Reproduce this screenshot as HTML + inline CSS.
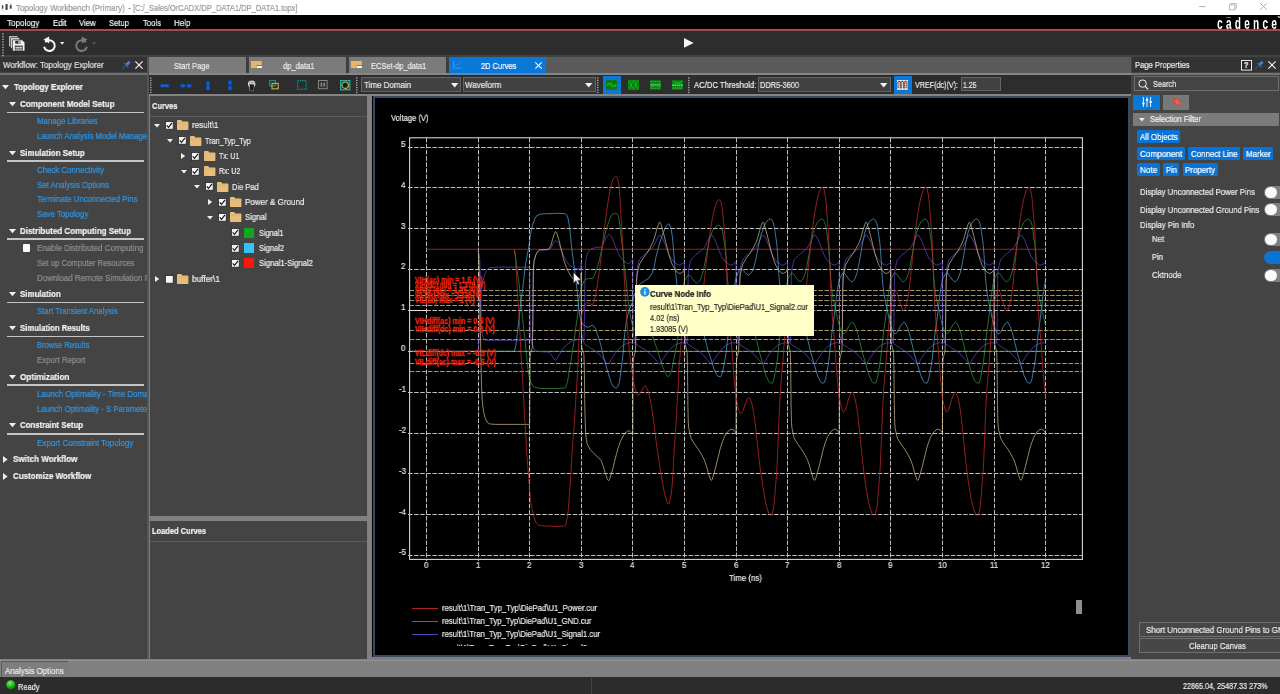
<!DOCTYPE html>
<html><head><meta charset="utf-8"><title>Topology Workbench</title>
<style>
*{margin:0;padding:0;box-sizing:border-box}
html,body{width:1280px;height:694px;overflow:hidden;background:#444;}
body{font-family:"Liberation Sans",sans-serif;font-size:9px;color:#e6e6e6;position:relative;line-height:1}
.a{position:absolute}
.t{will-change:transform;-webkit-text-stroke:0.22px currentColor;position:absolute;white-space:nowrap;line-height:12px;height:12px;transform-origin:0 50%}
.b{font-weight:bold}
.lnk{color:#2f97e6}
.dis{color:#8f8f8f}
.hr{position:absolute;height:1.4px;background:#c4c4c4;left:6.7px;width:137px}
.cb{position:absolute;width:8.6px;height:8.6px;background:#f4f4f4;border:0.8px solid #222}
.chip{position:absolute;background:#0a74d6;border-radius:1.5px;height:13px}
svg{position:absolute;overflow:visible}
</style></head>
<body>
<div class="a" style="left:0px;top:0px;width:1280px;height:16px;background:#ffffff;"></div>
<svg style="left:0px;top:0px" width="14" height="14" viewBox="0 0 14 14"><ellipse cx="2.6" cy="7" rx="0.85" ry="1.9" fill="#4a4a4a"/><rect x="5.4" y="4" width="2.3" height="5.9" rx="0.3" fill="#505050"/><ellipse cx="10.7" cy="6.7" rx="1.05" ry="2.2" fill="#484848"/><path d="M1.7 8.2C1.6 10.4 2.8 11.6 4.2 11.2M8.2 2.6C9.8 2.2 11.2 3.2 11.4 4.8" fill="none" stroke="#e6aab2" stroke-width="0.6"/></svg>
<div class="t " style="left:15.5px;top:1.6px;transform:scaleX(0.846);font-size:9.4px;color:#989898;">Topology Workbench (Primary)</div>
<div class="t " style="left:127.5px;top:1.6px;transform:scaleX(0.958);font-size:9.4px;color:#989898;">-</div>
<div class="t " style="left:133.3px;top:1.6px;transform:scaleX(0.804);font-size:9.4px;color:#989898;">[C:/_Sales/OrCADX/DP_DATA1/DP_DATA1.topx]</div>
<svg style="left:1199.2px;top:6.4px" width="7" height="1.2" viewBox="0 0 7 1.2"><rect width="6.6" height="1.1" fill="#b8b8b8"/></svg>
<svg style="left:1229px;top:3px" width="8" height="7.4" viewBox="0 0 8 7.4"><rect x="0.5" y="1.9" width="5.4" height="4.9" fill="none" stroke="#b4b4b4" stroke-width="0.9"/><path d="M1.9 1.9V0.5H7.3V5.3H5.9" fill="none" stroke="#b4b4b4" stroke-width="0.9"/></svg>
<svg style="left:1260px;top:2.8px" width="7" height="7" viewBox="0 0 7 7"><path d="M0.3 0.3L6.7 6.7M6.7 0.3L0.3 6.7" stroke="#a8a8a8" stroke-width="1"/></svg>
<div class="a" style="left:0px;top:15.2px;width:1280px;height:14.3px;background:#000000;"></div>
<div class="a" style="left:0px;top:29.3px;width:1280px;height:2px;background:#a24c4a;"></div>
<div class="t " style="left:7.0px;top:16.7px;transform:scaleX(0.897);color:#f2f2f2;">Topology</div>
<div class="t " style="left:52.6px;top:16.7px;transform:scaleX(0.864);color:#f2f2f2;">Edit</div>
<div class="t " style="left:79.2px;top:16.7px;transform:scaleX(0.868);color:#f2f2f2;">View</div>
<div class="t " style="left:109.4px;top:16.7px;transform:scaleX(0.846);color:#f2f2f2;">Setup</div>
<div class="t " style="left:143.0px;top:16.7px;transform:scaleX(0.857);color:#f2f2f2;">Tools</div>
<div class="t " style="left:174.0px;top:16.7px;transform:scaleX(0.891);color:#f2f2f2;">Help</div>
<div class="t b" style="left:1216.8px;top:17.5px;font-size:17px;letter-spacing:5.3px;color:#fff;transform:scaleX(0.6);-webkit-text-stroke:0">cadence</div>
<div class="a" style="left:1225.6px;top:16.8px;width:5.2px;height:1.4px;background:#c0485a;"></div>
<div class="t " style="left:1277.4px;top:12.4px;transform:scaleX(1.000);font-size:4px;color:#ccc;">&trade;</div>
<div class="a" style="left:0px;top:31.2px;width:1280px;height:24.6px;background:#2d2d2d;"></div>
<div class="a" style="left:0px;top:55px;width:1280px;height:2.2px;background:#424242;"></div>
<svg style="left:2px;top:32.6px" width="2" height="24" viewBox="0 0 2 24"><rect x="0.3" y="0.3" width="1.3" height="1.3" fill="#c4c4c4"/><rect x="0.3" y="3.0" width="1.3" height="1.3" fill="#c4c4c4"/><rect x="0.3" y="5.7" width="1.3" height="1.3" fill="#c4c4c4"/><rect x="0.3" y="8.4" width="1.3" height="1.3" fill="#c4c4c4"/><rect x="0.3" y="11.1" width="1.3" height="1.3" fill="#c4c4c4"/><rect x="0.3" y="13.8" width="1.3" height="1.3" fill="#c4c4c4"/><rect x="0.3" y="16.5" width="1.3" height="1.3" fill="#c4c4c4"/><rect x="0.3" y="19.2" width="1.3" height="1.3" fill="#c4c4c4"/><rect x="0.3" y="21.9" width="1.3" height="1.3" fill="#c4c4c4"/></svg>
<svg style="left:9px;top:36px" width="16.4" height="15.6" viewBox="0 0 16.4 15.6"><rect x="0" y="0" width="8.6" height="10.4" rx="0.6" fill="#bcbcbc"/><rect x="1.6" y="1.6" width="9" height="10.6" rx="0.6" fill="#dcdcdc" stroke="#2d2d2d" stroke-width="0.7"/><path d="M3.6 3.8H13L15.9 6.6V15.1H3.6Z" fill="#f6f6f6" stroke="#2d2d2d" stroke-width="0.7"/><rect x="6.2" y="4.7" width="5.2" height="3" fill="#2d2d2d"/><rect x="9.4" y="5.1" width="1.3" height="2.2" fill="#f6f6f6"/><rect x="5.8" y="9.6" width="8" height="4.8" fill="#2d2d2d"/><rect x="6.4" y="10.8" width="6.8" height="1" fill="#f6f6f6"/><rect x="6.4" y="12.6" width="6.8" height="1" fill="#f6f6f6"/></svg>
<svg style="left:42px;top:36px" width="15" height="16" viewBox="0 0 15 16"><path d="M3.2 6.2A5.4 5.4 0 1 1 2.1 10.8" fill="none" stroke="#f8f8f8" stroke-width="2"/><path d="M1.6 3.6L7.2 0.4V7.4Z" fill="#f8f8f8"/></svg>
<svg style="left:59.9px;top:42.4px" width="4.4" height="2.8" viewBox="0 0 4.4 2.8"><path d="M0 0H4.4L2.2 2.8Z" fill="#f0f0f0"/></svg>
<svg style="left:73.5px;top:36px" width="15" height="16" viewBox="0 0 15 16"><path d="M11.8 6.2A5.4 5.4 0 1 0 12.9 10.8" fill="none" stroke="#7a7a7a" stroke-width="2"/><path d="M13.4 3.6L7.8 0.4V7.4Z" fill="#7a7a7a"/></svg>
<svg style="left:92.3px;top:42.4px" width="4.4" height="2.8" viewBox="0 0 4.4 2.8"><path d="M0 0H4.4L2.2 2.8Z" fill="#555"/></svg>
<svg style="left:683.5px;top:38.3px" width="10" height="10" viewBox="0 0 10 10"><path d="M0 0L9.6 4.9L0 9.8Z" fill="#f4f4f4"/></svg>
<div class="a" style="left:0px;top:57.2px;width:148px;height:602.5px;background:#444444;"></div>
<div class="a" style="left:0px;top:57.4px;width:147px;height:15px;background:#333333;"></div>
<div class="a" style="left:0px;top:72.5px;width:147px;height:2.2px;background:#707070;"></div>
<div class="a" style="left:147px;top:57.4px;width:2px;height:602px;background:#555555;"></div>
<div class="t " style="left:3.2px;top:59.4px;transform:scaleX(0.885);color:#e0e0e0;">Workflow: Topology Explorer</div>
<svg style="left:121.4px;top:60.2px" width="10" height="11" viewBox="0 0 10 11"><g transform="rotate(45 5 5.5)"><rect x="3.6" y="0.2" width="2.8" height="4.6" fill="#3c70bc"/><rect x="2.2" y="4.4" width="5.6" height="1.1" fill="#3c70bc"/><path d="M5 5.4V10.6" stroke="#3566ac" stroke-width="0.9"/><rect x="4.2" y="0.8" width="0.8" height="3.4" fill="#6a9ade"/></g></svg>
<svg style="left:134.6px;top:60.9px" width="8" height="8" viewBox="0 0 8 8"><path d="M0.4 0.4L7.6 7.6M7.6 0.4L0.4 7.6" stroke="#f4f4f4" stroke-width="1.15"/></svg>
<svg style="left:1.7999999999999998px;top:85.10000000000001px" width="7.0" height="4.2" viewBox="0 0 7.0 4.2"><path d="M0 0H7.0L3.5 4.2Z" fill="#f0f0f0"/></svg>
<div class="t b" style="left:13.5px;top:81.1px;transform:scaleX(0.874);color:#f4f4f4;">Topology Explorer</div>
<svg style="left:8.6px;top:101.9px" width="7.0" height="4.2" viewBox="0 0 7.0 4.2"><path d="M0 0H7.0L3.5 4.2Z" fill="#f0f0f0"/></svg>
<div class="t b" style="left:20.0px;top:97.8px;transform:scaleX(0.892);color:#f4f4f4;">Component Model Setup</div>
<div class="hr" style="top:111.8px"></div>
<div class="t lnk" style="left:36.5px;top:115.4px;transform:scaleX(0.870);">Manage Libraries</div>
<div class="a" style="left:0;top:129px;width:147px;height:14px;overflow:hidden"><div class="t lnk" style="left:36.5px;top:1.4px;transform:scaleX(0.866);">Launch Analysis Model Manager</div>
</div>
<svg style="left:8.6px;top:150.8px" width="7.0" height="4.2" viewBox="0 0 7.0 4.2"><path d="M0 0H7.0L3.5 4.2Z" fill="#f0f0f0"/></svg>
<div class="t b" style="left:20.0px;top:146.7px;transform:scaleX(0.880);color:#f4f4f4;">Simulation Setup</div>
<div class="hr" style="top:160.4px"></div>
<div class="t lnk" style="left:36.5px;top:164.2px;transform:scaleX(0.870);">Check Connectivity</div>
<div class="t lnk" style="left:36.5px;top:178.6px;transform:scaleX(0.872);">Set Analysis Options</div>
<div class="t lnk" style="left:36.5px;top:193.4px;transform:scaleX(0.873);">Terminate Unconnected Pins</div>
<div class="t lnk" style="left:36.5px;top:207.9px;transform:scaleX(0.870);">Save Topology</div>
<svg style="left:8.6px;top:228.9px" width="7.0" height="4.2" viewBox="0 0 7.0 4.2"><path d="M0 0H7.0L3.5 4.2Z" fill="#f0f0f0"/></svg>
<div class="t b" style="left:20.0px;top:224.8px;transform:scaleX(0.888);color:#f4f4f4;">Distributed Computing Setup</div>
<div class="hr" style="top:238.4px"></div>
<div class="a" style="left:22.8px;top:244.2px;width:7.6px;height:7.6px;background:#fafafa;border-radius:1px"></div>
<div class="t dis" style="left:36.5px;top:242.0px;transform:scaleX(0.891);">Enable Distributed Computing</div>
<div class="t dis" style="left:36.5px;top:256.8px;transform:scaleX(0.859);">Set up Computer Resources</div>
<div class="a" style="left:0;top:270.5px;width:147px;height:14px;overflow:hidden"><div class="t dis" style="left:36.5px;top:1.0px;transform:scaleX(0.890);">Download Remote Simulation Files</div>
</div>
<svg style="left:8.6px;top:291.9px" width="7.0" height="4.2" viewBox="0 0 7.0 4.2"><path d="M0 0H7.0L3.5 4.2Z" fill="#f0f0f0"/></svg>
<div class="t b" style="left:20.0px;top:287.8px;transform:scaleX(0.885);color:#f4f4f4;">Simulation</div>
<div class="hr" style="top:301.7px"></div>
<div class="t lnk" style="left:36.5px;top:305.3px;transform:scaleX(0.856);">Start Transient Analysis</div>
<svg style="left:8.6px;top:326.0px" width="7.0" height="4.2" viewBox="0 0 7.0 4.2"><path d="M0 0H7.0L3.5 4.2Z" fill="#f0f0f0"/></svg>
<div class="t b" style="left:20.0px;top:321.9px;transform:scaleX(0.860);color:#f4f4f4;">Simulation Results</div>
<div class="hr" style="top:335.6px"></div>
<div class="t lnk" style="left:36.5px;top:339.4px;transform:scaleX(0.837);">Browse Results</div>
<div class="t dis" style="left:36.5px;top:354.3px;transform:scaleX(0.874);">Export Report</div>
<svg style="left:8.6px;top:374.7px" width="7.0" height="4.2" viewBox="0 0 7.0 4.2"><path d="M0 0H7.0L3.5 4.2Z" fill="#f0f0f0"/></svg>
<div class="t b" style="left:20.0px;top:370.6px;transform:scaleX(0.907);color:#f4f4f4;">Optimization</div>
<div class="hr" style="top:384.3px"></div>
<div class="a" style="left:0;top:387px;width:147px;height:30px;overflow:hidden"><div class="t lnk" style="left:36.5px;top:1.4px;transform:scaleX(0.885);">Launch Optimality - Time Domain</div>
<div class="t lnk" style="left:36.5px;top:16.1px;transform:scaleX(0.863);">Launch Optimality - S Parameter</div>
</div>
<svg style="left:8.6px;top:423.4px" width="7.0" height="4.2" viewBox="0 0 7.0 4.2"><path d="M0 0H7.0L3.5 4.2Z" fill="#f0f0f0"/></svg>
<div class="t b" style="left:20.0px;top:419.3px;transform:scaleX(0.869);color:#f4f4f4;">Constraint Setup</div>
<div class="hr" style="top:433.3px"></div>
<div class="t lnk" style="left:36.5px;top:437.0px;transform:scaleX(0.892);">Export Constraint Topology</div>
<svg style="left:3.2px;top:456.1px" width="4.6" height="7.0" viewBox="0 0 4.6 7.0"><path d="M0 0L4.6 3.5L0 7.0Z" fill="#f0f0f0"/></svg>
<div class="t b" style="left:13.0px;top:453.4px;transform:scaleX(0.897);color:#f4f4f4;">Switch Workflow</div>
<svg style="left:3.2px;top:472.5px" width="4.6" height="7.0" viewBox="0 0 4.6 7.0"><path d="M0 0L4.6 3.5L0 7.0Z" fill="#f0f0f0"/></svg>
<div class="t b" style="left:12.7px;top:469.8px;transform:scaleX(0.886);color:#f4f4f4;">Customize Workflow</div>
<div class="a" style="left:149px;top:57.2px;width:983px;height:17.3px;background:#5a5a5a;"></div>
<div class="a" style="left:149px;top:57.4px;width:97.3px;height:17px;background:#7b7b7b;"></div>
<div class="a" style="left:249px;top:57.4px;width:97.3px;height:17px;background:#7b7b7b;"></div>
<div class="a" style="left:349px;top:57.4px;width:97.3px;height:17px;background:#7b7b7b;"></div>
<div class="a" style="left:449px;top:57.4px;width:97.3px;height:17px;background:#0a78d7;"></div>
<div class="a" style="left:246.3px;top:57.4px;width:2.7px;height:15.6px;background:#3e3e3e;"></div>
<div class="a" style="left:346.3px;top:57.4px;width:2.7px;height:15.6px;background:#3e3e3e;"></div>
<div class="a" style="left:446.3px;top:57.4px;width:2.7px;height:15.6px;background:#3e3e3e;"></div>
<div class="a" style="left:149px;top:73px;width:983px;height:2px;background:#868686;"></div>
<div class="a" style="left:449px;top:73px;width:97.4px;height:2px;background:#5a88bc;"></div>
<div class="t " style="left:173.7px;top:59.7px;transform:scaleX(0.837);color:#ececec;">Start Page</div>
<svg style="left:251px;top:61.1px" width="11" height="7" viewBox="0 0 11 7"><path d="M0 0H10.8V3.9H5.6V7H0Z" fill="#e8b468"/><rect x="5.9" y="5" width="5" height="2" fill="#fafafa"/></svg>
<div class="t " style="left:282.8px;top:59.7px;transform:scaleX(0.839);color:#ececec;">dp_data1</div>
<svg style="left:351.3px;top:61.1px" width="11" height="7" viewBox="0 0 11 7"><path d="M0 0H10.8V3.9H5.6V7H0Z" fill="#e8b468"/><rect x="5.9" y="5" width="5" height="2" fill="#fafafa"/></svg>
<div class="t " style="left:370.5px;top:59.7px;transform:scaleX(0.830);color:#ececec;">ECSet-dp_data1</div>
<svg style="left:452.5px;top:61px" width="9" height="8" viewBox="0 0 9 8"><path d="M0.6 0V7.2H8.4" fill="none" stroke="#3f9cf0" stroke-width="0.9"/><path d="M1.4 5.8L3.4 3L5.2 4L7.6 1.4" fill="none" stroke="#3f9cf0" stroke-width="0.6"/></svg>
<div class="t " style="left:480.7px;top:59.7px;transform:scaleX(0.830);color:#ffffff;">2D Curves</div>
<svg style="left:534.6px;top:62px" width="7" height="7" viewBox="0 0 7 7"><path d="M0.3 0.3L6.7 6.7M6.7 0.3L0.3 6.7" stroke="#fff" stroke-width="1.1"/></svg>
<div class="a" style="left:149px;top:75px;width:983px;height:18.7px;background:#2d2d2d;"></div>
<div class="a" style="left:149px;top:93.5px;width:983px;height:2.2px;background:#848484;"></div>
<svg style="left:149.6px;top:76.5px" width="2" height="17" viewBox="0 0 2 17"><rect x="0.2" y="0.4" width="1.2" height="1.2" fill="#c8c8c8"/><rect x="0.2" y="2.8" width="1.2" height="1.2" fill="#c8c8c8"/><rect x="0.2" y="5.2" width="1.2" height="1.2" fill="#c8c8c8"/><rect x="0.2" y="7.6" width="1.2" height="1.2" fill="#c8c8c8"/><rect x="0.2" y="10.0" width="1.2" height="1.2" fill="#c8c8c8"/><rect x="0.2" y="12.4" width="1.2" height="1.2" fill="#c8c8c8"/><rect x="0.2" y="14.8" width="1.2" height="1.2" fill="#c8c8c8"/></svg>
<svg style="left:356.2px;top:76.5px" width="2" height="17" viewBox="0 0 2 17"><rect x="0.2" y="0.4" width="1.2" height="1.2" fill="#c8c8c8"/><rect x="0.2" y="2.8" width="1.2" height="1.2" fill="#c8c8c8"/><rect x="0.2" y="5.2" width="1.2" height="1.2" fill="#c8c8c8"/><rect x="0.2" y="7.6" width="1.2" height="1.2" fill="#c8c8c8"/><rect x="0.2" y="10.0" width="1.2" height="1.2" fill="#c8c8c8"/><rect x="0.2" y="12.4" width="1.2" height="1.2" fill="#c8c8c8"/><rect x="0.2" y="14.8" width="1.2" height="1.2" fill="#c8c8c8"/></svg>
<svg style="left:596.8px;top:76.5px" width="2" height="17" viewBox="0 0 2 17"><rect x="0.2" y="0.4" width="1.2" height="1.2" fill="#c8c8c8"/><rect x="0.2" y="2.8" width="1.2" height="1.2" fill="#c8c8c8"/><rect x="0.2" y="5.2" width="1.2" height="1.2" fill="#c8c8c8"/><rect x="0.2" y="7.6" width="1.2" height="1.2" fill="#c8c8c8"/><rect x="0.2" y="10.0" width="1.2" height="1.2" fill="#c8c8c8"/><rect x="0.2" y="12.4" width="1.2" height="1.2" fill="#c8c8c8"/><rect x="0.2" y="14.8" width="1.2" height="1.2" fill="#c8c8c8"/></svg>
<svg style="left:688.4px;top:76.5px" width="2" height="17" viewBox="0 0 2 17"><rect x="0.2" y="0.4" width="1.2" height="1.2" fill="#c8c8c8"/><rect x="0.2" y="2.8" width="1.2" height="1.2" fill="#c8c8c8"/><rect x="0.2" y="5.2" width="1.2" height="1.2" fill="#c8c8c8"/><rect x="0.2" y="7.6" width="1.2" height="1.2" fill="#c8c8c8"/><rect x="0.2" y="10.0" width="1.2" height="1.2" fill="#c8c8c8"/><rect x="0.2" y="12.4" width="1.2" height="1.2" fill="#c8c8c8"/><rect x="0.2" y="14.8" width="1.2" height="1.2" fill="#c8c8c8"/></svg>
<svg style="left:159.5px;top:82.6px" width="9.4" height="5.6" viewBox="0 0 9.4 5.6"><ellipse cx="2.4" cy="2.8" rx="2.4" ry="2.3" fill="#0a48aa"/><ellipse cx="7" cy="2.8" rx="2.4" ry="2.3" fill="#0a48aa"/><rect x="1" y="2.3" width="7.4" height="1" fill="#2a7cd6"/></svg>
<svg style="left:180px;top:82.6px" width="12" height="5.6" viewBox="0 0 12 5.6"><ellipse cx="2.8" cy="2.8" rx="2.8" ry="2.4" fill="#0a48aa"/><ellipse cx="9.2" cy="2.8" rx="2.8" ry="2.4" fill="#0a48aa"/><rect x="1.6" y="2.3" width="3" height="1" fill="#2a7cd6"/><rect x="7.6" y="2.3" width="3" height="1" fill="#2a7cd6"/></svg>
<svg style="left:205px;top:80.6px" width="6" height="9.6" viewBox="0 0 6 9.6"><ellipse cx="3" cy="2.4" rx="2.5" ry="2.4" fill="#0a48aa"/><ellipse cx="3" cy="7.2" rx="2.5" ry="2.4" fill="#0a48aa"/><rect x="2.5" y="1" width="1" height="7.4" fill="#2a7cd6"/></svg>
<svg style="left:227px;top:80.1px" width="6" height="10.6" viewBox="0 0 6 10.6"><ellipse cx="3" cy="2.6" rx="2.5" ry="2.6" fill="#0a48aa"/><ellipse cx="3" cy="8" rx="2.5" ry="2.6" fill="#0a48aa"/><rect x="2.5" y="1.4" width="1" height="2.6" fill="#2a7cd6"/><rect x="2.5" y="6.8" width="1" height="2.6" fill="#2a7cd6"/></svg>
<svg style="left:247.3px;top:80px" width="9.4" height="10.8" viewBox="0 0 9.4 10.8"><path d="M1 5C0.4 2.4 1.8 0.7 4.4 0.5C7.2 0.4 8.8 2 8.4 4.6C8.2 6 7.6 6.8 7 7.4V10.4H2.6V7.4C1.8 6.8 1.2 6 1 5Z" fill="#dedede"/><path d="M2.7 1.9V3.6M4.2 1.3V3.4M5.8 1.5V3.6M7.2 2.4V4" stroke="#555" stroke-width="0.55"/><path d="M2.2 4.6C3.6 4 6 4 7.4 4.8L6.8 7V10.4H3V7Z" fill="#1e1e1e"/></svg>
<svg style="left:269px;top:80px" width="10" height="10" viewBox="0 0 10 10"><rect x="0.6" y="0.6" width="5.8" height="5.2" fill="none" stroke="#1f8f8a" stroke-width="1.1"/><rect x="3" y="3.4" width="6.2" height="5.4" fill="none" stroke="#c4b246" stroke-width="1.1"/></svg>
<svg style="left:296.5px;top:80px" width="10" height="10" viewBox="0 0 10 10"><rect x="0.6" y="0.6" width="8.6" height="8.6" fill="none" stroke="#1f8f8a" stroke-width="1.1" stroke-dasharray="1.4 0.9"/></svg>
<svg style="left:318.3px;top:80.2px" width="9.6" height="9.2" viewBox="0 0 9.6 9.2"><rect x="0.5" y="0.5" width="8.6" height="8.2" fill="none" stroke="#868686" stroke-width="1"/><rect x="2.6" y="2.6" width="1.6" height="4" fill="#8a8a8a"/><rect x="5.4" y="2.6" width="1.6" height="4" fill="#8a8a8a"/></svg>
<svg style="left:340px;top:79.8px" width="10.4" height="10.4" viewBox="0 0 10.4 10.4"><rect x="0.6" y="0.6" width="9.2" height="9.2" fill="none" stroke="#28b0a0" stroke-width="1.2"/><circle cx="5.2" cy="5.2" r="3.2" fill="#1c1c1c" stroke="#b8c45a" stroke-width="1.1"/></svg>
<div class="a" style="left:361px;top:77.2px;width:99.60000000000002px;height:14.4px;background:#414141;border:1px solid #646464;"></div>
<div class="t " style="left:363.7px;top:79.1px;transform:scaleX(0.884);color:#e8e8e8;">Time Domain</div>
<svg style="left:450.5px;top:82.6px" width="7.4" height="4.4" viewBox="0 0 7.4 4.4"><path d="M0 0H7.4L3.7 4.4Z" fill="#f4f4f4"/></svg>
<div class="a" style="left:463px;top:77.2px;width:133px;height:14.4px;background:#414141;border:1px solid #646464;"></div>
<div class="t " style="left:464.8px;top:79.1px;transform:scaleX(0.890);color:#e8e8e8;">Waveform</div>
<svg style="left:585.1999999999999px;top:82.6px" width="7.4" height="4.4" viewBox="0 0 7.4 4.4"><path d="M0 0H7.4L3.7 4.4Z" fill="#f4f4f4"/></svg>
<div class="a" style="left:602.6px;top:75.8px;width:18.4px;height:18px;background:#0a78d7;"></div>
<svg style="left:605.8px;top:80.2px" width="11" height="9.8" viewBox="0 0 11 9.8"><rect width="11" height="9.8" rx="1.2" fill="#0a7812"/><path d="M0.6 5.6C2 3 3.8 3 5.4 5S8.8 7 10.4 4.4" fill="none" stroke="#1fc824" stroke-width="1.1"/><path d="M5.5 0.6V9.2M0.6 4.9H10.4" stroke="#13a01a" stroke-width="0.7"/></svg>
<svg style="left:627.6px;top:80.2px" width="11" height="9.8" viewBox="0 0 11 9.8"><rect width="11" height="9.8" rx="1.2" fill="#0a7812"/><rect x="0.4" y="0.4" width="10.2" height="9" rx="1" fill="none" stroke="#13a41a" stroke-width="0.6"/><path d="M0.8 1.2C2.6 1.6 3.8 8.2 5.5 8.6C7.2 8.2 8.4 1.6 10.2 1.2M0.8 8.6C2.6 8.2 3.8 1.6 5.5 1.2C7.2 1.6 8.4 8.2 10.2 8.6" fill="none" stroke="#1fc824" stroke-width="0.85"/></svg>
<svg style="left:649.9px;top:80.2px" width="11" height="9.8" viewBox="0 0 11 9.8"><rect width="11" height="9.8" rx="1.2" fill="#0a7812"/><path d="M0.6 1.6H10.4M0.6 8.2H10.4" stroke="#1fc824" stroke-width="1" stroke-dasharray="1.5 0.7"/><path d="M0.2 4.9H10.8" stroke="#a8f0a8" stroke-width="1" stroke-dasharray="1.6 0.6"/><path d="M0.8 7C3.4 5.2 7.6 5.2 10.2 7" fill="none" stroke="#1fc824" stroke-width="0.8"/><path d="M0.8 3C3.4 4.2 7.6 4.2 10.2 3" fill="none" stroke="#18b41e" stroke-width="0.7"/></svg>
<svg style="left:671.8px;top:80.2px" width="11" height="9.8" viewBox="0 0 11 9.8"><rect width="11" height="9.8" rx="1.2" fill="#0a7812"/><path d="M0.6 1.4C3.6 1.8 7.4 4.4 10.4 4.6M0.6 4.6C3.6 4.4 7.4 1.8 10.4 1.4" fill="none" stroke="#1fc824" stroke-width="0.8"/><path d="M0.2 5.2H10.8" stroke="#a8f0a8" stroke-width="1" stroke-dasharray="1.6 0.6"/><path d="M0.6 7.2H10.4M0.6 8.6H10.4" stroke="#1fc824" stroke-width="0.9" stroke-dasharray="1.5 0.7"/></svg>
<div class="t " style="left:693.6px;top:79.1px;transform:scaleX(0.856);color:#ececec;">AC/DC Threshold:</div>
<div class="a" style="left:758px;top:77.2px;width:133px;height:14.4px;background:#414141;border:1px solid #646464;"></div>
<div class="t " style="left:759.8px;top:79.1px;transform:scaleX(0.821);color:#e8e8e8;">DDR5-3600</div>
<svg style="left:880.3px;top:82.6px" width="7.4" height="4.4" viewBox="0 0 7.4 4.4"><path d="M0 0H7.4L3.7 4.4Z" fill="#f4f4f4"/></svg>
<div class="a" style="left:894px;top:75.8px;width:18px;height:18px;background:#0a78d7;"></div>
<svg style="left:897.3px;top:80px" width="10.8" height="9.8" viewBox="0 0 10.8 9.8"><rect width="10.8" height="9.8" fill="#f4f4f4"/><path d="M0.4 3.2H10.4M0.4 5.2H10.4M0.4 7.2H10.4" stroke="#d23a2a" stroke-width="0.8" stroke-dasharray="1.3 0.6"/><path d="M1 8.6V2.6C1.6 1.2 2.8 1.2 3.4 2.6V8.6M4.2 8.6V2.6C4.8 1.2 6 1.2 6.6 2.6V8.6M7.4 8.6V2.6C8 1.2 9.2 1.2 9.8 2.6V8.6" fill="none" stroke="#5a2a24" stroke-width="0.7"/><path d="M0.8 2.2C1.6 0.8 2.8 0.8 3.6 2.2M4 2.2C4.8 0.8 6 0.8 6.8 2.2M7.2 2.2C8 0.8 9.2 0.8 10 2.2" fill="none" stroke="#3a2422" stroke-width="0.9"/></svg>
<div class="t " style="left:914.6px;top:79.1px;transform:scaleX(0.796);color:#ececec;">VREF(dc)(V):</div>
<div class="a" style="left:960.5px;top:77.4px;width:40.4px;height:14px;background:#414141;border:1px solid #646464;"></div>
<div class="t " style="left:963.3px;top:79.1px;transform:scaleX(0.776);color:#e8e8e8;">1.25</div>
<div class="a" style="left:149px;top:96px;width:223.6px;height:563.6px;background:#808082;"></div>
<div class="a" style="left:150px;top:96px;width:217.4px;height:419.6px;background:#444444;"></div>
<div class="a" style="left:150px;top:116px;width:217.4px;height:1.4px;background:#5c5c5c;"></div>
<div class="a" style="left:150px;top:520.6px;width:217.4px;height:138.2px;background:#444444;"></div>
<div class="a" style="left:150px;top:540.5px;width:217.4px;height:1.2px;background:#5c5c5c;"></div>
<div class="t b" style="left:151.8px;top:100.4px;transform:scaleX(0.832);color:#f2f2f2;">Curves</div>
<div class="t b" style="left:152.0px;top:525.0px;transform:scaleX(0.831);color:#f2f2f2;">Loaded Curves</div>
<svg style="left:154.0px;top:123.5px" width="6" height="3.6" viewBox="0 0 6 3.6"><path d="M0 0H6L3.0 3.6Z" fill="#f0f0f0"/></svg>
<svg style="left:164.8px;top:121.0px" width="8.6" height="8.6" viewBox="0 0 8.6 8.6"><rect x="0.4" y="0.4" width="7.8" height="7.8" fill="#f6f6f6" stroke="#222" stroke-width="0.8"/><path d="M1.7 4.4L3.5 6.4L7 1.8" fill="none" stroke="#111" stroke-width="1.1"/></svg>
<svg style="left:177.10000000000002px;top:120.3px" width="11.4" height="10" viewBox="0 0 11.4 10"><path d="M0 1.2C0 0.5 0.4 0 1 0H4.2L5.4 1.4H10.6C11.1 1.4 11.4 1.8 11.4 2.2V9.2C11.4 9.7 11.1 10 10.6 10H0.8C0.3 10 0 9.7 0 9.2Z" fill="#e8bd7c"/><path d="M0 3H11.4" stroke="#d9a85e" stroke-width="0.5"/></svg>
<div class="t " style="left:192.0px;top:119.1px;transform:scaleX(0.898);color:#ececec;">result\1</div>
<svg style="left:167.3px;top:138.85px" width="6" height="3.6" viewBox="0 0 6 3.6"><path d="M0 0H6L3.0 3.6Z" fill="#f0f0f0"/></svg>
<svg style="left:178.10000000000002px;top:136.35px" width="8.6" height="8.6" viewBox="0 0 8.6 8.6"><rect x="0.4" y="0.4" width="7.8" height="7.8" fill="#f6f6f6" stroke="#222" stroke-width="0.8"/><path d="M1.7 4.4L3.5 6.4L7 1.8" fill="none" stroke="#111" stroke-width="1.1"/></svg>
<svg style="left:190.40000000000003px;top:135.65px" width="11.4" height="10" viewBox="0 0 11.4 10"><path d="M0 1.2C0 0.5 0.4 0 1 0H4.2L5.4 1.4H10.6C11.1 1.4 11.4 1.8 11.4 2.2V9.2C11.4 9.7 11.1 10 10.6 10H0.8C0.3 10 0 9.7 0 9.2Z" fill="#e8bd7c"/><path d="M0 3H11.4" stroke="#d9a85e" stroke-width="0.5"/></svg>
<div class="t " style="left:205.3px;top:134.5px;transform:scaleX(0.799);color:#ececec;">Tran_Typ_Typ</div>
<svg style="left:181.10000000000002px;top:153.0px" width="4.2" height="6" viewBox="0 0 4.2 6"><path d="M0 0L4.2 3.0L0 6Z" fill="#f0f0f0"/></svg>
<svg style="left:191.4px;top:151.7px" width="8.6" height="8.6" viewBox="0 0 8.6 8.6"><rect x="0.4" y="0.4" width="7.8" height="7.8" fill="#f6f6f6" stroke="#222" stroke-width="0.8"/><path d="M1.7 4.4L3.5 6.4L7 1.8" fill="none" stroke="#111" stroke-width="1.1"/></svg>
<svg style="left:203.70000000000002px;top:151.0px" width="11.4" height="10" viewBox="0 0 11.4 10"><path d="M0 1.2C0 0.5 0.4 0 1 0H4.2L5.4 1.4H10.6C11.1 1.4 11.4 1.8 11.4 2.2V9.2C11.4 9.7 11.1 10 10.6 10H0.8C0.3 10 0 9.7 0 9.2Z" fill="#e8bd7c"/><path d="M0 3H11.4" stroke="#d9a85e" stroke-width="0.5"/></svg>
<div class="t " style="left:218.6px;top:149.8px;transform:scaleX(0.762);color:#ececec;">Tx: U1</div>
<svg style="left:180.6px;top:169.54999999999998px" width="6" height="3.6" viewBox="0 0 6 3.6"><path d="M0 0H6L3.0 3.6Z" fill="#f0f0f0"/></svg>
<svg style="left:191.4px;top:167.04999999999998px" width="8.6" height="8.6" viewBox="0 0 8.6 8.6"><rect x="0.4" y="0.4" width="7.8" height="7.8" fill="#f6f6f6" stroke="#222" stroke-width="0.8"/><path d="M1.7 4.4L3.5 6.4L7 1.8" fill="none" stroke="#111" stroke-width="1.1"/></svg>
<svg style="left:203.70000000000002px;top:166.35px" width="11.4" height="10" viewBox="0 0 11.4 10"><path d="M0 1.2C0 0.5 0.4 0 1 0H4.2L5.4 1.4H10.6C11.1 1.4 11.4 1.8 11.4 2.2V9.2C11.4 9.7 11.1 10 10.6 10H0.8C0.3 10 0 9.7 0 9.2Z" fill="#e8bd7c"/><path d="M0 3H11.4" stroke="#d9a85e" stroke-width="0.5"/></svg>
<div class="t " style="left:218.6px;top:165.2px;transform:scaleX(0.771);color:#ececec;">Rx: U2</div>
<svg style="left:193.9px;top:184.89999999999998px" width="6" height="3.6" viewBox="0 0 6 3.6"><path d="M0 0H6L3.0 3.6Z" fill="#f0f0f0"/></svg>
<svg style="left:204.70000000000002px;top:182.39999999999998px" width="8.6" height="8.6" viewBox="0 0 8.6 8.6"><rect x="0.4" y="0.4" width="7.8" height="7.8" fill="#f6f6f6" stroke="#222" stroke-width="0.8"/><path d="M1.7 4.4L3.5 6.4L7 1.8" fill="none" stroke="#111" stroke-width="1.1"/></svg>
<svg style="left:217.00000000000003px;top:181.7px" width="11.4" height="10" viewBox="0 0 11.4 10"><path d="M0 1.2C0 0.5 0.4 0 1 0H4.2L5.4 1.4H10.6C11.1 1.4 11.4 1.8 11.4 2.2V9.2C11.4 9.7 11.1 10 10.6 10H0.8C0.3 10 0 9.7 0 9.2Z" fill="#e8bd7c"/><path d="M0 3H11.4" stroke="#d9a85e" stroke-width="0.5"/></svg>
<div class="t " style="left:231.9px;top:180.5px;transform:scaleX(0.831);color:#ececec;">Die Pad</div>
<svg style="left:207.70000000000002px;top:199.05px" width="4.2" height="6" viewBox="0 0 4.2 6"><path d="M0 0L4.2 3.0L0 6Z" fill="#f0f0f0"/></svg>
<svg style="left:218.0px;top:197.75px" width="8.6" height="8.6" viewBox="0 0 8.6 8.6"><rect x="0.4" y="0.4" width="7.8" height="7.8" fill="#f6f6f6" stroke="#222" stroke-width="0.8"/><path d="M1.7 4.4L3.5 6.4L7 1.8" fill="none" stroke="#111" stroke-width="1.1"/></svg>
<svg style="left:230.3px;top:197.05px" width="11.4" height="10" viewBox="0 0 11.4 10"><path d="M0 1.2C0 0.5 0.4 0 1 0H4.2L5.4 1.4H10.6C11.1 1.4 11.4 1.8 11.4 2.2V9.2C11.4 9.7 11.1 10 10.6 10H0.8C0.3 10 0 9.7 0 9.2Z" fill="#e8bd7c"/><path d="M0 3H11.4" stroke="#d9a85e" stroke-width="0.5"/></svg>
<div class="t " style="left:245.2px;top:195.9px;transform:scaleX(0.893);color:#ececec;">Power &amp; Ground</div>
<svg style="left:207.2px;top:215.59999999999997px" width="6" height="3.6" viewBox="0 0 6 3.6"><path d="M0 0H6L3.0 3.6Z" fill="#f0f0f0"/></svg>
<svg style="left:218.0px;top:213.09999999999997px" width="8.6" height="8.6" viewBox="0 0 8.6 8.6"><rect x="0.4" y="0.4" width="7.8" height="7.8" fill="#f6f6f6" stroke="#222" stroke-width="0.8"/><path d="M1.7 4.4L3.5 6.4L7 1.8" fill="none" stroke="#111" stroke-width="1.1"/></svg>
<svg style="left:230.3px;top:212.39999999999998px" width="11.4" height="10" viewBox="0 0 11.4 10"><path d="M0 1.2C0 0.5 0.4 0 1 0H4.2L5.4 1.4H10.6C11.1 1.4 11.4 1.8 11.4 2.2V9.2C11.4 9.7 11.1 10 10.6 10H0.8C0.3 10 0 9.7 0 9.2Z" fill="#e8bd7c"/><path d="M0 3H11.4" stroke="#d9a85e" stroke-width="0.5"/></svg>
<div class="t " style="left:245.2px;top:211.2px;transform:scaleX(0.859);color:#ececec;">Signal</div>
<svg style="left:231.3px;top:228.45px" width="8.6" height="8.6" viewBox="0 0 8.6 8.6"><rect x="0.4" y="0.4" width="7.8" height="7.8" fill="#f6f6f6" stroke="#222" stroke-width="0.8"/><path d="M1.7 4.4L3.5 6.4L7 1.8" fill="none" stroke="#111" stroke-width="1.1"/></svg>
<div class="a" style="left:243.9px;top:227.75px;width:10px;height:10px;background:#0aa81a;"></div>
<div class="t " style="left:258.5px;top:226.6px;transform:scaleX(0.813);color:#ececec;">Signal1</div>
<svg style="left:231.3px;top:243.79999999999998px" width="8.6" height="8.6" viewBox="0 0 8.6 8.6"><rect x="0.4" y="0.4" width="7.8" height="7.8" fill="#f6f6f6" stroke="#222" stroke-width="0.8"/><path d="M1.7 4.4L3.5 6.4L7 1.8" fill="none" stroke="#111" stroke-width="1.1"/></svg>
<div class="a" style="left:243.9px;top:243.1px;width:10px;height:10px;background:#35c2fc;"></div>
<div class="t " style="left:258.5px;top:241.9px;transform:scaleX(0.836);color:#ececec;">Signal2</div>
<svg style="left:231.3px;top:259.15px" width="8.6" height="8.6" viewBox="0 0 8.6 8.6"><rect x="0.4" y="0.4" width="7.8" height="7.8" fill="#f6f6f6" stroke="#222" stroke-width="0.8"/><path d="M1.7 4.4L3.5 6.4L7 1.8" fill="none" stroke="#111" stroke-width="1.1"/></svg>
<div class="a" style="left:243.9px;top:258.45px;width:10px;height:10px;background:#fa1808;"></div>
<div class="t " style="left:258.5px;top:257.2px;transform:scaleX(0.855);color:#ececec;">Signal1-Signal2</div>
<svg style="left:154.50000000000003px;top:275.8px" width="4.2" height="6" viewBox="0 0 4.2 6"><path d="M0 0L4.2 3.0L0 6Z" fill="#f0f0f0"/></svg>
<svg style="left:164.8px;top:274.5px" width="8.6" height="8.6" viewBox="0 0 8.6 8.6"><rect x="0.4" y="0.4" width="7.8" height="7.8" fill="#f6f6f6" stroke="#222" stroke-width="0.8"/></svg>
<svg style="left:177.10000000000002px;top:273.8px" width="11.4" height="10" viewBox="0 0 11.4 10"><path d="M0 1.2C0 0.5 0.4 0 1 0H4.2L5.4 1.4H10.6C11.1 1.4 11.4 1.8 11.4 2.2V9.2C11.4 9.7 11.1 10 10.6 10H0.8C0.3 10 0 9.7 0 9.2Z" fill="#e8bd7c"/><path d="M0 3H11.4" stroke="#d9a85e" stroke-width="0.5"/></svg>
<div class="t " style="left:192.0px;top:272.6px;transform:scaleX(0.922);color:#ececec;">buffer\1</div>
<div class="a" style="left:372.2px;top:95.6px;width:758px;height:561px;background:#000000;"></div>
<div class="a" style="left:373px;top:96.1px;width:757px;height:1.5px;background:#3a4862;"></div>
<div class="a" style="left:373px;top:96.1px;width:1.5px;height:560.4px;background:#3a4862;"></div>
<div class="a" style="left:1128px;top:96.1px;width:2px;height:560.4px;background:#3a4862;"></div>
<div class="a" style="left:373px;top:654.5px;width:757px;height:2px;background:#3a4862;"></div>
<div class="a" style="left:367.8px;top:656.5px;width:763px;height:3.2px;background:#808082;"></div>
<svg style="left:0;top:0" width="1280" height="694" viewBox="0 0 1280 694">
<defs><clipPath id="plot"><rect x="409.6" y="137.8" width="672.8" height="421.6"/></clipPath></defs>
<rect x="409.6" y="137.8" width="672.8" height="421.6" fill="none" stroke="#d4d4d4" stroke-width="1.1"/>
<path d="M426.5 137.8V561.0M478.5 137.8V561.0M529.5 137.8V561.0M581.5 137.8V561.0M632.5 137.8V561.0M684.5 137.8V561.0M736.5 137.8V561.0M787.5 137.8V561.0M839.5 137.8V561.0M890.5 137.8V561.0M942.5 137.8V561.0M994.5 137.8V561.0M1045.5 137.8V561.0" stroke="#bebebe" stroke-width="1" stroke-dasharray="4.6 1.5" fill="none"/>
<path d="M408.0 555.5H1082.4M408.0 514.5H1082.4M408.0 473.5H1082.4M408.0 433.5H1082.4M408.0 392.5H1082.4M408.0 351.5H1082.4M408.0 310.5H1082.4M408.0 269.5H1082.4M408.0 228.5H1082.4M408.0 187.5H1082.4M408.0 147.5H1082.4" stroke="#bebebe" stroke-width="1" stroke-dasharray="4.6 1.5" fill="none"/>
<path d="M409.6 290.5H1082.4M409.6 295.5H1082.4M409.6 300.5H1082.4M409.6 305.5H1082.4M409.6 330.5H1082.4M409.6 339.5H1082.4M409.6 363.5H1082.4M409.6 371.5H1082.4" stroke="#b8a674" stroke-width="0.9" stroke-dasharray="4.6 1.5" fill="none"/>
<path d="M409.6 310.5H426.4" stroke="#e8e4d4" stroke-width="1" fill="none"/>
<g clip-path="url(#plot)">
<path d="M426.4 249.2 L1045.6 249.2" fill="none" stroke="#c81e1e" stroke-width="1.1" stroke-opacity="0.85" stroke-linejoin="round" />
<path d="M478.0 351.3 L1045.6 351.3" fill="none" stroke="#3ea03e" stroke-width="1.0" stroke-opacity="0.85" stroke-linejoin="round" />
<path d="M409.6 351.3 L478.0 351.3" fill="none" stroke="#b8cce0" stroke-width="1.0" stroke-opacity="0.8" stroke-linejoin="round" />
<path d="M478.0 351.3 L478.4 348.3 L479.0 339.0 L479.4 327.3 L479.7 319.8 L479.9 312.9 L480.3 304.6 L480.9 296.7 L481.7 289.2 L482.7 282.2 L484.2 276.0 L486.7 270.3 L488.9 267.9 L494.9 267.2 L501.1 267.1 L507.3 267.1 L513.5 267.1 L519.7 267.1 L525.9 267.1 L529.6 267.1 L529.8 284.3 L530.0 316.5 L530.2 335.0 L531.0 340.3 L533.1 346.3 L534.1 349.5 L535.4 351.1 L541.4 351.7 L547.6 352.0 L549.0 352.2 L552.9 357.1 L554.8 360.0 L555.4 360.3 L556.0 360.0 L559.1 354.8 L562.2 349.6 L566.3 345.0 L571.3 341.3 L577.1 339.5 L583.3 339.9 L583.7 339.9 L583.9 339.1 L584.3 326.8 L584.5 313.2 L584.7 296.1 L584.9 285.8 L585.1 278.5 L585.5 268.1 L585.9 261.1 L586.4 256.9 L587.6 252.9 L590.7 249.1 L596.5 247.2 L601.0 247.1 L601.8 246.4 L604.7 240.8 L606.8 236.4 L608.4 234.7 L609.1 234.5 L609.9 234.8 L612.4 238.1 L614.4 243.8 L616.7 249.6 L619.4 255.3 L622.9 260.4 L627.4 263.3 L628.9 263.5 L632.0 260.6 L632.6 259.7 L632.8 261.4 L633.0 318.3 L633.2 332.4 L633.6 336.2 L635.3 342.1 L636.3 344.2 L641.3 347.6 L646.6 350.7 L651.4 354.8 L655.3 359.4 L659.2 363.7 L659.8 364.0 L660.3 363.8 L663.3 358.5 L666.9 353.3 L670.8 348.5 L675.5 344.6 L681.3 342.7 L685.6 343.0 L686.9 342.4 L687.1 341.4 L687.5 326.8 L687.7 308.7 L687.9 290.0 L688.1 280.3 L688.3 273.5 L688.7 268.8 L690.2 262.3 L691.2 259.3 L695.5 255.1 L700.3 251.3 L704.8 247.0 L707.5 241.4 L710.2 235.9 L710.8 235.1 L711.2 234.9 L711.9 235.1 L714.5 239.0 L717.0 244.9 L719.1 250.7 L721.6 256.6 L725.1 261.7 L729.8 264.9 L731.7 265.0 L734.6 263.4 L736.0 261.4 L736.2 318.3 L736.4 332.4 L736.8 336.2 L738.5 342.1 L739.5 344.2 L744.5 347.6 L749.8 350.7 L754.6 354.8 L758.5 359.4 L762.4 363.7 L763.0 364.0 L763.5 363.8 L766.5 358.5 L770.1 353.3 L774.0 348.5 L778.7 344.6 L784.5 342.7 L788.8 343.0 L790.1 342.4 L790.3 341.4 L790.7 326.8 L790.9 308.7 L791.1 290.0 L791.3 280.3 L791.5 273.5 L791.9 268.8 L793.4 262.3 L794.4 259.3 L798.7 255.1 L803.5 251.3 L808.0 247.0 L810.7 241.4 L813.4 235.9 L814.0 235.1 L814.4 234.9 L815.1 235.1 L817.7 239.0 L820.2 244.9 L822.3 250.7 L824.8 256.6 L828.3 261.7 L833.0 264.9 L834.9 265.0 L837.8 263.4 L839.2 261.4 L839.4 318.3 L839.6 332.4 L840.0 336.2 L841.7 342.1 L842.7 344.2 L847.7 347.6 L853.0 350.7 L857.8 354.8 L861.7 359.4 L865.6 363.7 L866.2 364.0 L866.7 363.8 L869.7 358.5 L873.3 353.3 L877.2 348.5 L881.9 344.6 L887.7 342.7 L892.0 343.0 L893.3 342.4 L893.5 341.4 L893.9 326.8 L894.1 308.7 L894.3 290.0 L894.5 280.3 L894.7 273.5 L895.1 268.8 L896.6 262.3 L897.6 259.3 L901.9 255.1 L906.7 251.3 L911.2 247.0 L913.9 241.4 L916.6 235.9 L917.2 235.1 L917.6 234.9 L918.3 235.1 L920.9 239.0 L923.4 244.9 L925.5 250.7 L928.0 256.6 L931.5 261.7 L936.2 264.9 L938.1 265.0 L941.0 263.4 L942.4 261.4 L942.6 318.3 L942.8 332.4 L943.2 336.2 L944.9 342.1 L945.9 344.2 L950.9 347.6 L956.2 350.7 L961.0 354.8 L964.9 359.4 L968.8 363.7 L969.4 364.0 L969.9 363.8 L972.9 358.5 L976.5 353.3 L980.4 348.5 L985.1 344.6 L990.9 342.7 L995.2 343.0 L996.5 342.4 L996.7 341.4 L997.1 326.8 L997.3 308.7 L997.5 290.0 L997.7 280.3 L997.9 273.5 L998.3 268.8 L999.8 262.3 L1000.8 259.3 L1005.1 255.1 L1009.9 251.3 L1014.4 247.0 L1017.1 241.4 L1019.8 235.9 L1020.4 235.1 L1020.8 234.9 L1021.5 235.1 L1024.1 239.0 L1026.6 244.9 L1028.7 250.7 L1031.2 256.6 L1034.7 261.7 L1039.4 264.9 L1041.3 265.0 L1044.2 263.4 L1045.6 261.4" fill="none" stroke="#6a4ad0" stroke-width="0.95" stroke-opacity="0.72" stroke-linejoin="round" />
<path d="M478.0 249.2 L478.2 249.3 L478.6 250.6 L479.4 256.4 L479.7 258.7 L480.1 270.6 L480.3 278.5 L480.5 286.4 L480.7 293.7 L480.9 302.2 L481.1 311.1 L481.3 319.1 L481.5 325.0 L482.1 332.3 L482.7 336.5 L483.2 337.8 L484.6 339.8 L485.6 340.3 L491.8 340.3 L498.0 340.3 L504.2 340.3 L510.4 340.3 L516.6 340.3 L522.8 340.3 L529.0 340.3 L532.1 340.3 L532.3 339.5 L532.7 326.8 L532.9 310.4 L533.1 290.0 L533.3 271.6 L533.5 263.4 L534.1 259.5 L536.4 253.6 L538.9 250.6 L540.3 250.0 L546.5 250.0 L548.6 249.8 L550.9 248.3 L553.3 243.0 L555.2 240.9 L555.8 240.6 L556.6 240.9 L558.7 243.4 L561.2 249.4 L563.4 255.1 L566.1 260.6 L569.8 265.6 L575.2 268.5 L580.2 268.4 L581.0 268.1 L581.2 261.4 L581.4 318.3 L581.6 332.4 L582.0 336.2 L583.7 342.1 L584.7 344.2 L589.7 347.6 L595.0 350.7 L599.8 354.8 L603.7 359.4 L607.6 363.7 L608.2 364.0 L608.7 363.8 L611.7 358.5 L615.3 353.3 L619.2 348.5 L623.9 344.6 L629.7 342.7 L634.0 343.0 L635.3 342.4 L635.5 341.4 L635.9 326.8 L636.1 308.7 L636.3 290.0 L636.5 280.3 L636.7 273.5 L637.1 268.8 L638.6 262.3 L639.6 259.3 L643.9 255.1 L648.7 251.3 L653.2 247.0 L655.9 241.4 L658.6 235.9 L659.2 235.1 L659.6 234.9 L660.3 235.1 L662.9 239.0 L665.4 244.9 L667.5 250.7 L670.0 256.6 L673.5 261.7 L678.2 264.9 L680.1 265.0 L683.0 263.4 L684.4 261.4 L684.6 318.3 L684.8 332.4 L685.2 336.2 L686.9 342.1 L687.9 344.2 L692.9 347.6 L698.2 350.7 L703.0 354.8 L706.9 359.4 L710.8 363.7 L711.4 364.0 L711.9 363.8 L714.9 358.5 L718.5 353.3 L722.4 348.5 L727.1 344.6 L732.9 342.7 L737.2 343.0 L738.5 342.4 L738.7 341.4 L739.1 326.8 L739.3 308.7 L739.5 290.0 L739.7 280.3 L739.9 273.5 L740.3 268.8 L741.8 262.3 L742.8 259.3 L747.1 255.1 L751.9 251.3 L756.4 247.0 L759.1 241.4 L761.8 235.9 L762.4 235.1 L762.8 234.9 L763.5 235.1 L766.1 239.0 L768.6 244.9 L770.7 250.7 L773.2 256.6 L776.7 261.7 L781.4 264.9 L783.3 265.0 L786.2 263.4 L787.6 261.4 L787.8 318.3 L788.0 332.4 L788.4 336.2 L790.1 342.1 L791.1 344.2 L796.1 347.6 L801.4 350.7 L806.2 354.8 L810.1 359.4 L814.0 363.7 L814.6 364.0 L815.1 363.8 L818.1 358.5 L821.7 353.3 L825.6 348.5 L830.3 344.6 L836.1 342.7 L840.4 343.0 L841.7 342.4 L841.9 341.4 L842.3 326.8 L842.5 308.7 L842.7 290.0 L842.9 280.3 L843.1 273.5 L843.5 268.8 L845.0 262.3 L846.0 259.3 L850.3 255.1 L855.1 251.3 L859.6 247.0 L862.3 241.4 L865.0 235.9 L865.6 235.1 L866.0 234.9 L866.7 235.1 L869.3 239.0 L871.8 244.9 L873.9 250.7 L876.4 256.6 L879.9 261.7 L884.6 264.9 L886.5 265.0 L889.4 263.4 L890.8 261.4 L891.0 318.3 L891.2 332.4 L891.6 336.2 L893.3 342.1 L894.3 344.2 L899.3 347.6 L904.6 350.7 L909.4 354.8 L913.3 359.4 L917.2 363.7 L917.8 364.0 L918.3 363.8 L921.3 358.5 L924.9 353.3 L928.8 348.5 L933.5 344.6 L939.3 342.7 L943.6 343.0 L944.9 342.4 L945.1 341.4 L945.5 326.8 L945.7 308.7 L945.9 290.0 L946.1 280.3 L946.3 273.5 L946.7 268.8 L948.2 262.3 L949.2 259.3 L953.5 255.1 L958.3 251.3 L962.8 247.0 L965.5 241.4 L968.2 235.9 L968.8 235.1 L969.2 234.9 L969.9 235.1 L972.5 239.0 L975.0 244.9 L977.1 250.7 L979.6 256.6 L983.1 261.7 L987.8 264.9 L989.7 265.0 L992.6 263.4 L994.0 261.4 L994.2 318.3 L994.4 332.4 L994.8 336.2 L996.5 342.1 L997.5 344.2 L1002.5 347.6 L1007.8 350.7 L1012.6 354.8 L1016.5 359.4 L1020.4 363.7 L1021.0 364.0 L1021.5 363.8 L1024.5 358.5 L1028.1 353.3 L1032.0 348.5 L1036.7 344.6 L1042.5 342.7 L1045.6 343.1" fill="none" stroke="#6a4ad0" stroke-width="0.95" stroke-opacity="0.72" stroke-linejoin="round" />
<path d="M514.1 249.2 L514.3 249.4 L514.9 251.9 L515.8 258.2 L516.4 264.4 L517.2 270.8 L518.2 277.5 L519.3 285.1 L519.9 291.3 L520.5 297.9 L521.1 304.4 L521.8 310.7 L522.6 318.5 L523.4 326.0 L524.2 332.8 L525.1 340.1 L525.7 347.1 L526.3 353.6 L527.1 361.2 L527.9 368.3 L528.8 374.9 L530.2 381.3 L532.1 384.9 L534.6 387.2 L540.5 388.5 L546.7 388.5 L552.9 388.5 L559.1 388.4 L565.3 388.0 L565.7 387.5 L567.6 381.1 L568.8 374.1 L569.8 367.8 L570.9 361.2 L571.9 354.4 L572.9 347.6 L574.0 341.2 L575.0 334.0 L575.8 327.5 L576.9 320.2 L577.7 313.5 L578.3 306.3 L579.1 298.7 L580.2 292.1 L581.8 286.2 L584.3 280.6 L585.1 279.5 L587.8 278.6 L592.1 278.6 L592.8 278.2 L595.6 272.5 L597.7 266.1 L599.4 259.8 L600.8 253.5 L602.3 246.8 L603.7 240.3 L605.1 234.0 L606.8 227.8 L608.7 221.7 L611.1 216.0 L612.4 214.2 L615.7 213.2 L616.5 213.5 L617.9 215.3 L618.6 216.7 L619.6 223.2 L620.4 229.8 L621.2 237.5 L622.1 244.5 L622.9 251.2 L623.7 258.5 L624.3 264.8 L625.0 271.1 L625.8 278.3 L626.6 285.9 L627.2 291.9 L628.1 299.4 L628.9 305.9 L629.7 311.8 L630.7 317.8 L632.2 324.2 L633.4 328.1 L635.7 330.8 L636.7 331.3 L637.1 331.2 L637.8 330.7 L640.4 324.9 L642.7 319.3 L644.2 316.2 L644.8 315.5 L645.2 315.4 L646.0 315.7 L648.5 319.0 L650.3 324.7 L651.8 331.2 L653.2 337.9 L655.1 343.7 L657.4 349.9 L659.2 355.7 L661.1 361.6 L662.9 367.4 L665.4 373.2 L667.5 376.2 L668.3 376.6 L668.7 376.6 L669.5 375.7 L671.6 371.0 L673.0 364.1 L674.3 357.2 L675.5 351.2 L676.8 344.6 L677.8 338.1 L678.6 332.4 L678.8 319.2 L679.7 313.3 L680.5 306.2 L681.3 299.6 L682.1 293.6 L683.2 287.3 L684.4 281.0 L687.7 275.6 L688.3 275.0 L689.1 275.1 L690.6 276.2 L694.1 281.0 L696.4 283.1 L697.2 283.2 L699.9 280.6 L702.4 274.5 L703.8 268.4 L705.0 262.1 L706.3 255.5 L707.5 249.0 L708.8 243.0 L710.2 237.1 L712.3 231.3 L715.2 227.1 L717.8 225.2 L718.7 225.1 L720.1 225.9 L721.3 227.8 L722.2 229.9 L723.4 236.6 L724.4 243.0 L725.3 249.4 L725.9 256.7 L726.5 265.0 L726.9 271.0 L727.3 277.2 L728.0 284.7 L728.8 292.0 L730.0 298.9 L731.5 304.9 L732.9 310.8 L734.3 317.4 L736.0 323.6 L738.3 329.2 L739.5 330.9 L740.1 331.2 L742.8 329.8 L745.7 324.5 L747.8 321.9 L749.2 321.2 L749.6 321.2 L750.4 322.0 L752.7 326.5 L754.6 332.5 L756.2 338.9 L757.7 344.8 L759.1 351.0 L760.8 357.1 L762.6 363.4 L764.3 369.6 L766.1 375.7 L768.6 381.2 L769.6 382.5 L772.1 383.2 L772.3 383.1 L772.9 382.0 L774.0 378.8 L775.2 372.1 L776.5 365.3 L777.5 358.3 L778.3 350.9 L779.1 343.1 L780.0 335.2 L780.8 328.7 L781.8 322.1 L782.6 316.1 L783.5 308.6 L784.3 301.3 L785.1 294.6 L786.2 287.6 L787.2 281.5 L787.6 279.4 L790.7 273.9 L791.3 273.1 L791.7 272.9 L793.4 273.8 L796.9 278.9 L799.4 281.6 L800.0 281.9 L801.0 281.4 L803.3 278.7 L805.6 272.4 L807.0 265.8 L808.2 259.0 L809.5 251.9 L810.5 245.9 L811.7 239.4 L813.2 232.8 L815.1 226.8 L817.9 221.6 L820.8 219.2 L821.9 219.0 L823.3 219.9 L824.3 221.4 L825.4 224.2 L826.6 231.5 L827.6 238.3 L828.5 245.3 L829.1 253.2 L829.5 259.2 L829.9 265.3 L830.3 272.1 L830.7 278.4 L831.4 285.6 L832.2 292.9 L833.4 299.7 L834.9 306.1 L836.3 312.7 L837.5 318.8 L839.0 324.7 L840.6 329.8 L842.5 333.2 L843.1 333.7 L844.2 333.5 L846.0 332.0 L848.7 326.4 L850.8 323.4 L852.2 322.4 L852.8 322.3 L853.6 323.1 L855.9 327.7 L857.8 333.7 L859.4 340.1 L860.9 346.1 L862.3 352.2 L864.0 358.1 L865.8 364.2 L867.5 370.1 L869.3 375.8 L872.0 381.5 L873.0 382.7 L875.3 383.2 L875.5 383.1 L876.1 382.0 L877.2 378.8 L878.4 372.1 L879.7 365.3 L880.7 358.3 L881.5 350.9 L882.3 343.1 L883.2 335.2 L884.0 328.7 L885.0 322.1 L885.8 316.1 L886.7 308.6 L887.5 301.3 L888.3 294.6 L889.4 287.6 L890.4 281.5 L890.8 279.4 L893.9 273.9 L894.5 273.1 L894.9 272.9 L896.6 273.8 L900.1 278.9 L902.6 281.6 L903.2 281.9 L904.2 281.4 L906.5 278.7 L908.8 272.4 L910.2 265.8 L911.4 259.0 L912.7 251.9 L913.7 245.9 L914.9 239.4 L916.4 232.8 L918.3 226.8 L921.1 221.6 L924.0 219.2 L925.1 219.0 L926.5 219.9 L927.5 221.4 L928.6 224.2 L929.8 231.5 L930.8 238.3 L931.7 245.3 L932.3 253.2 L932.7 259.2 L933.1 265.3 L933.5 272.1 L933.9 278.4 L934.6 285.6 L935.4 292.9 L936.6 299.7 L938.1 306.1 L939.5 312.7 L940.7 318.8 L942.2 324.7 L943.8 329.8 L945.7 333.2 L946.3 333.7 L947.4 333.5 L949.2 332.0 L951.9 326.4 L954.0 323.4 L955.4 322.4 L956.0 322.3 L956.8 323.1 L959.1 327.7 L961.0 333.7 L962.6 340.1 L964.1 346.1 L965.5 352.2 L967.2 358.1 L969.0 364.2 L970.7 370.1 L972.5 375.8 L975.2 381.5 L976.2 382.7 L978.5 383.2 L978.7 383.1 L979.3 382.0 L980.4 378.8 L981.6 372.1 L982.9 365.3 L983.9 358.3 L984.7 350.9 L985.5 343.1 L986.4 335.2 L987.2 328.7 L988.2 322.1 L989.0 316.1 L989.9 308.6 L990.7 301.3 L991.5 294.6 L992.6 287.6 L993.6 281.5 L994.0 279.4 L997.1 273.9 L997.7 273.1 L998.1 272.9 L999.8 273.8 L1003.3 278.9 L1005.8 281.6 L1006.4 281.9 L1007.4 281.4 L1009.7 278.7 L1012.0 272.4 L1013.4 265.8 L1014.6 259.0 L1015.9 251.9 L1016.9 245.9 L1018.1 239.4 L1019.6 232.8 L1021.5 226.8 L1024.3 221.6 L1027.2 219.2 L1028.3 219.0 L1029.7 219.9 L1030.7 221.4 L1031.8 224.2 L1033.0 231.5 L1034.0 238.3 L1034.9 245.3 L1035.5 253.2 L1035.9 259.2 L1036.3 265.3 L1036.7 272.1 L1037.1 278.4 L1037.8 285.6 L1038.6 292.9 L1039.8 299.7 L1041.3 306.1 L1042.7 312.7 L1043.9 318.8 L1045.4 324.7 L1045.6 325.5" fill="none" stroke="#38a048" stroke-width="0.95" stroke-opacity="0.72" stroke-linejoin="round" />
<path d="M478.0 351.3 L484.2 351.3 L490.4 351.3 L496.6 351.3 L502.8 351.3 L509.0 351.3 L514.1 351.3 L514.3 351.2 L515.6 346.9 L516.6 339.8 L517.4 333.2 L518.2 326.0 L519.1 318.4 L519.9 310.7 L520.7 303.2 L521.6 296.8 L522.6 290.4 L523.4 282.9 L524.0 276.8 L524.9 269.2 L525.9 262.5 L527.1 255.6 L528.4 249.3 L529.4 242.9 L530.2 236.6 L531.3 230.3 L532.9 223.9 L535.2 218.1 L536.6 215.9 L540.1 214.1 L546.3 213.7 L552.5 213.5 L558.7 213.3 L564.9 213.7 L565.9 214.2 L567.0 215.5 L568.0 218.0 L569.2 225.2 L570.1 232.1 L570.7 238.2 L571.5 246.1 L572.3 253.6 L573.2 259.7 L574.2 266.5 L575.0 273.0 L575.8 280.1 L576.7 286.9 L577.5 293.9 L578.1 300.7 L578.7 307.3 L579.5 314.3 L581.0 320.7 L582.4 324.1 L586.2 326.9 L588.2 327.2 L592.3 325.2 L593.0 325.3 L595.2 328.2 L597.3 334.1 L599.4 340.1 L601.2 346.4 L602.7 353.0 L604.1 359.0 L605.8 365.0 L607.6 371.3 L609.5 377.7 L611.7 383.7 L613.4 386.6 L615.7 388.0 L616.5 388.0 L617.1 387.6 L618.6 384.8 L619.4 382.3 L620.4 375.3 L621.2 368.6 L622.1 362.3 L622.9 355.2 L623.5 348.1 L624.1 339.9 L624.8 333.5 L625.6 326.7 L626.6 320.3 L628.1 314.2 L629.9 308.4 L632.2 302.6 L634.0 296.3 L636.1 290.3 L638.8 284.9 L643.9 281.4 L648.9 277.9 L652.0 273.5 L653.6 269.3 L654.9 263.1 L656.1 256.5 L657.6 250.5 L659.2 244.4 L661.1 238.6 L663.3 232.6 L665.6 227.0 L667.9 224.3 L668.7 223.9 L669.1 223.9 L669.7 224.9 L671.0 228.4 L672.2 235.4 L672.8 241.1 L673.5 249.9 L674.1 257.0 L674.7 263.5 L675.3 269.6 L676.1 277.3 L676.6 281.0 L676.8 288.6 L677.6 294.8 L678.8 300.7 L680.5 307.3 L681.9 313.7 L683.4 319.9 L685.2 326.1 L687.5 330.5 L688.1 331.1 L688.9 331.2 L691.2 329.6 L694.1 324.1 L696.2 321.5 L697.6 320.7 L698.0 320.7 L698.8 321.4 L701.1 325.6 L703.2 331.9 L704.8 337.9 L706.5 344.3 L708.1 350.5 L710.0 356.2 L711.9 362.2 L713.7 367.9 L716.2 373.7 L717.8 376.2 L720.5 376.9 L720.9 376.6 L722.2 373.6 L723.6 366.7 L724.9 360.4 L725.9 353.9 L726.7 347.1 L727.5 339.9 L728.4 332.6 L729.2 326.6 L730.2 320.5 L731.3 313.3 L732.1 306.2 L732.9 299.6 L733.7 292.9 L734.6 286.7 L735.6 280.1 L736.0 277.8 L738.5 271.9 L739.7 269.4 L740.1 269.0 L741.8 269.1 L746.1 273.5 L748.0 275.0 L748.8 275.0 L751.7 272.4 L754.2 266.4 L755.6 260.2 L756.8 254.2 L758.1 247.8 L759.3 241.9 L760.8 235.8 L761.6 233.3 L761.8 233.0 L763.7 227.0 L766.5 221.5 L769.2 219.2 L770.3 219.0 L771.7 219.9 L772.7 221.4 L773.8 224.2 L775.0 231.5 L776.0 238.3 L776.9 245.3 L777.5 253.2 L777.9 259.2 L778.3 265.3 L778.7 272.1 L779.1 278.4 L779.8 285.6 L780.6 292.9 L781.8 299.7 L783.3 306.1 L784.7 312.7 L785.9 318.8 L787.4 324.7 L789.0 329.8 L790.9 333.2 L791.5 333.7 L792.6 333.5 L794.4 332.0 L797.1 326.4 L799.2 323.4 L800.6 322.4 L801.2 322.3 L802.0 323.1 L804.3 327.7 L806.2 333.7 L807.8 340.1 L809.3 346.1 L810.7 352.2 L812.4 358.1 L814.2 364.2 L815.9 370.1 L817.7 375.8 L820.4 381.5 L821.4 382.7 L823.7 383.2 L823.9 383.1 L824.5 382.0 L825.6 378.8 L826.8 372.1 L828.1 365.3 L829.1 358.3 L829.9 350.9 L830.7 343.1 L831.6 335.2 L832.4 328.7 L833.4 322.1 L834.2 316.1 L835.1 308.6 L835.9 301.3 L836.7 294.6 L837.8 287.6 L838.8 281.5 L839.2 279.4 L842.3 273.9 L842.9 273.1 L843.3 272.9 L845.0 273.8 L848.5 278.9 L851.0 281.6 L851.6 281.9 L852.6 281.4 L854.9 278.7 L857.2 272.4 L858.6 265.8 L859.8 259.0 L861.1 251.9 L862.1 245.9 L863.3 239.4 L864.8 232.8 L866.7 226.8 L869.5 221.6 L872.4 219.2 L873.5 219.0 L874.9 219.9 L875.9 221.4 L877.0 224.2 L878.2 231.5 L879.2 238.3 L880.1 245.3 L880.7 253.2 L881.1 259.2 L881.5 265.3 L881.9 272.1 L882.3 278.4 L883.0 285.6 L883.8 292.9 L885.0 299.7 L886.5 306.1 L887.9 312.7 L889.1 318.8 L890.6 324.7 L892.2 329.8 L894.1 333.2 L894.7 333.7 L895.8 333.5 L897.6 332.0 L900.3 326.4 L902.4 323.4 L903.8 322.4 L904.4 322.3 L905.2 323.1 L907.5 327.7 L909.4 333.7 L911.0 340.1 L912.5 346.1 L913.9 352.2 L915.6 358.1 L917.4 364.2 L919.1 370.1 L920.9 375.8 L923.6 381.5 L924.6 382.7 L926.9 383.2 L927.1 383.1 L927.7 382.0 L928.8 378.8 L930.0 372.1 L931.3 365.3 L932.3 358.3 L933.1 350.9 L933.9 343.1 L934.8 335.2 L935.6 328.7 L936.6 322.1 L937.4 316.1 L938.3 308.6 L939.1 301.3 L939.9 294.6 L941.0 287.6 L942.0 281.5 L942.4 279.4 L945.5 273.9 L946.1 273.1 L946.5 272.9 L948.2 273.8 L951.7 278.9 L954.2 281.6 L954.8 281.9 L955.8 281.4 L958.1 278.7 L960.4 272.4 L961.8 265.8 L963.0 259.0 L964.3 251.9 L965.3 245.9 L966.5 239.4 L968.0 232.8 L969.9 226.8 L972.7 221.6 L975.6 219.2 L976.7 219.0 L978.1 219.9 L979.1 221.4 L980.2 224.2 L981.4 231.5 L982.4 238.3 L983.3 245.3 L983.9 253.2 L984.3 259.2 L984.7 265.3 L985.1 272.1 L985.5 278.4 L986.2 285.6 L987.0 292.9 L988.2 299.7 L989.7 306.1 L991.1 312.7 L992.3 318.8 L993.8 324.7 L995.4 329.8 L997.3 333.2 L997.9 333.7 L999.0 333.5 L1000.8 332.0 L1003.5 326.4 L1005.6 323.4 L1007.0 322.4 L1007.6 322.3 L1008.4 323.1 L1010.7 327.7 L1012.6 333.7 L1014.2 340.1 L1015.7 346.1 L1017.1 352.2 L1018.8 358.1 L1020.6 364.2 L1022.3 370.1 L1024.1 375.8 L1026.8 381.5 L1027.8 382.7 L1030.1 383.2 L1030.3 383.1 L1030.9 382.0 L1032.0 378.8 L1033.2 372.1 L1034.5 365.3 L1035.5 358.3 L1036.3 350.9 L1037.1 343.1 L1038.0 335.2 L1038.8 328.7 L1039.8 322.1 L1040.6 316.1 L1041.5 308.6 L1042.3 301.3 L1043.1 294.6 L1044.2 287.6 L1045.2 281.5 L1045.6 279.4" fill="none" stroke="#58b0e4" stroke-width="0.95" stroke-opacity="0.72" stroke-linejoin="round" />
<path d="M478.0 249.2 L478.2 250.4 L478.8 260.5 L479.2 271.8 L479.4 280.4 L479.7 290.2 L479.9 302.0 L480.1 313.9 L480.3 325.2 L480.5 336.0 L480.7 346.0 L480.9 356.9 L481.1 367.9 L481.3 377.8 L481.5 385.5 L481.9 394.0 L482.3 400.5 L483.0 407.5 L484.0 413.7 L485.4 418.8 L487.5 422.5 L489.6 423.9 L495.5 424.4 L501.7 424.4 L507.9 424.4 L514.1 424.4 L520.3 424.4 L526.5 424.4 L529.6 424.4 L529.8 407.3 L530.0 375.1 L530.2 356.6 L531.0 351.3 L532.1 348.5 L532.3 347.3 L532.7 333.3 L532.9 316.2 L533.1 295.1 L533.3 275.9 L533.5 266.9 L534.1 261.3 L535.8 255.1 L537.0 252.3 L539.5 249.9 L545.7 249.5 L548.4 249.1 L549.2 248.5 L550.9 245.4 L552.5 239.5 L554.4 233.5 L555.2 231.9 L555.6 231.7 L556.0 231.9 L556.8 233.4 L558.7 239.2 L560.4 245.7 L561.8 251.9 L563.4 258.5 L565.3 264.5 L567.6 270.3 L570.7 275.8 L573.2 278.8 L577.5 280.6 L580.2 280.0 L581.0 279.5 L581.2 272.9 L581.4 329.7 L581.6 343.8 L582.0 347.7 L583.7 353.6 L583.9 354.8 L584.3 368.1 L584.5 382.0 L584.7 399.5 L584.9 410.0 L585.1 417.5 L585.3 423.5 L585.7 432.2 L586.2 438.4 L587.2 443.6 L589.9 449.3 L594.0 453.6 L598.5 457.8 L601.0 460.3 L603.3 466.4 L605.1 472.6 L607.0 478.4 L608.0 480.2 L608.4 480.6 L608.9 480.4 L609.5 479.5 L611.5 473.3 L613.2 467.5 L614.6 461.1 L616.3 454.7 L617.9 448.8 L620.0 442.6 L622.5 437.0 L625.0 433.1 L628.3 430.8 L629.1 430.7 L631.6 433.0 L632.6 434.7 L632.8 433.0 L633.0 376.1 L633.2 362.0 L633.6 358.1 L635.3 351.6 L635.5 350.0 L635.7 343.8 L635.9 334.5 L636.1 316.1 L636.3 297.1 L636.5 287.1 L636.7 280.1 L637.1 275.0 L638.4 268.3 L639.6 264.0 L642.9 258.6 L646.6 253.5 L649.9 248.1 L652.8 242.5 L654.9 236.4 L656.5 230.3 L658.4 224.5 L659.2 222.6 L659.6 222.2 L660.0 222.4 L660.7 223.4 L662.5 229.7 L664.2 235.8 L665.6 241.6 L667.1 247.6 L668.5 253.6 L670.4 259.7 L672.6 265.3 L675.7 270.5 L678.6 273.1 L680.3 273.4 L682.7 272.1 L684.4 269.6 L684.6 326.5 L684.8 340.6 L685.2 344.5 L686.9 351.0 L687.1 352.6 L687.3 358.8 L687.5 368.1 L687.7 386.5 L687.9 405.5 L688.1 415.5 L688.3 422.5 L688.7 427.6 L690.0 434.3 L691.2 438.6 L694.5 444.0 L698.2 449.1 L701.5 454.5 L704.4 460.1 L706.5 466.2 L708.1 472.3 L710.0 478.1 L710.8 480.0 L711.2 480.4 L711.6 480.2 L712.3 479.2 L714.1 472.9 L715.8 466.8 L717.2 461.0 L718.7 455.0 L720.1 449.0 L722.0 442.9 L724.2 437.3 L727.3 432.1 L730.2 429.5 L731.9 429.2 L734.3 430.5 L736.0 433.0 L736.2 376.1 L736.4 362.0 L736.8 358.1 L738.5 351.6 L738.7 350.0 L738.9 343.8 L739.1 334.5 L739.3 316.1 L739.5 297.1 L739.7 287.1 L739.9 280.1 L740.3 275.0 L741.6 268.3 L742.8 264.0 L746.1 258.6 L749.8 253.5 L753.1 248.1 L756.0 242.5 L758.1 236.4 L759.7 230.3 L761.6 224.5 L762.4 222.6 L762.8 222.2 L763.2 222.4 L763.9 223.4 L765.7 229.7 L767.4 235.8 L768.8 241.6 L770.3 247.6 L771.7 253.6 L773.6 259.7 L775.8 265.3 L778.9 270.5 L781.8 273.1 L783.5 273.4 L785.9 272.1 L787.6 269.6 L787.8 326.5 L788.0 340.6 L788.4 344.5 L790.1 351.0 L790.3 352.6 L790.5 358.8 L790.7 368.1 L790.9 386.5 L791.1 405.5 L791.3 415.5 L791.5 422.5 L791.9 427.6 L793.2 434.3 L794.4 438.6 L797.7 444.0 L801.4 449.1 L804.7 454.5 L807.6 460.1 L809.7 466.2 L811.3 472.3 L813.2 478.1 L814.0 480.0 L814.4 480.4 L814.8 480.2 L815.5 479.2 L817.3 472.9 L819.0 466.8 L820.4 461.0 L821.9 455.0 L823.3 449.0 L825.2 442.9 L827.4 437.3 L830.5 432.1 L833.4 429.5 L835.1 429.2 L837.5 430.5 L839.2 433.0 L839.4 376.1 L839.6 362.0 L840.0 358.1 L841.7 351.6 L841.9 350.0 L842.1 343.8 L842.3 334.5 L842.5 316.1 L842.7 297.1 L842.9 287.1 L843.1 280.1 L843.5 275.0 L844.8 268.3 L846.0 264.0 L849.3 258.6 L853.0 253.5 L856.3 248.1 L859.2 242.5 L861.3 236.4 L862.9 230.3 L864.8 224.5 L865.6 222.6 L866.0 222.2 L866.4 222.4 L867.1 223.4 L868.9 229.7 L870.6 235.8 L872.0 241.6 L873.5 247.6 L874.9 253.6 L876.8 259.7 L879.0 265.3 L882.1 270.5 L885.0 273.1 L886.7 273.4 L889.1 272.1 L890.8 269.6 L891.0 326.5 L891.2 340.6 L891.6 344.5 L893.3 351.0 L893.5 352.6 L893.7 358.8 L893.9 368.1 L894.1 386.5 L894.3 405.5 L894.5 415.5 L894.7 422.5 L895.1 427.6 L896.4 434.3 L897.6 438.6 L900.9 444.0 L904.6 449.1 L907.9 454.5 L910.8 460.1 L912.9 466.2 L914.5 472.3 L916.4 478.1 L917.2 480.0 L917.6 480.4 L918.0 480.2 L918.7 479.2 L920.5 472.9 L922.2 466.8 L923.6 461.0 L925.1 455.0 L926.5 449.0 L928.4 442.9 L930.6 437.3 L933.7 432.1 L936.6 429.5 L938.3 429.2 L940.7 430.5 L942.4 433.0 L942.6 376.1 L942.8 362.0 L943.2 358.1 L944.9 351.6 L945.1 350.0 L945.3 343.8 L945.5 334.5 L945.7 316.1 L945.9 297.1 L946.1 287.1 L946.3 280.1 L946.7 275.0 L948.0 268.3 L949.2 264.0 L952.5 258.6 L956.2 253.5 L959.5 248.1 L962.4 242.5 L964.5 236.4 L966.1 230.3 L968.0 224.5 L968.8 222.6 L969.2 222.2 L969.6 222.4 L970.3 223.4 L972.1 229.7 L973.8 235.8 L975.2 241.6 L976.7 247.6 L978.1 253.6 L980.0 259.7 L982.2 265.3 L985.3 270.5 L988.2 273.1 L989.9 273.4 L992.3 272.1 L994.0 269.6 L994.2 326.5 L994.4 340.6 L994.8 344.5 L996.5 351.0 L996.7 352.6 L996.9 358.8 L997.1 368.1 L997.3 386.5 L997.5 405.5 L997.7 415.5 L997.9 422.5 L998.3 427.6 L999.6 434.3 L1000.8 438.6 L1004.1 444.0 L1007.8 449.1 L1011.1 454.5 L1014.0 460.1 L1016.1 466.2 L1017.7 472.3 L1019.6 478.1 L1020.4 480.0 L1020.8 480.4 L1021.2 480.2 L1021.9 479.2 L1023.7 472.9 L1025.4 466.8 L1026.8 461.0 L1028.3 455.0 L1029.7 449.0 L1031.6 442.9 L1033.8 437.3 L1036.9 432.1 L1039.8 429.5 L1041.5 429.2 L1043.9 430.5 L1045.6 433.0" fill="none" stroke="#d8c690" stroke-width="0.95" stroke-opacity="0.72" stroke-linejoin="round" />
<path d="M514.1 249.2 L514.3 249.6 L514.9 253.7 L515.6 260.9 L516.0 267.1 L516.4 274.3 L516.8 281.0 L517.2 287.1 L517.6 293.2 L518.0 299.6 L518.5 306.1 L518.9 312.8 L519.3 320.0 L519.7 327.8 L520.1 336.0 L520.5 344.1 L520.9 352.0 L521.3 359.6 L521.8 366.5 L522.2 372.9 L522.6 379.4 L523.0 386.7 L523.4 394.4 L523.8 402.0 L524.2 409.3 L524.6 416.6 L525.1 423.7 L525.5 431.0 L525.9 438.2 L526.3 444.8 L526.7 451.0 L527.1 457.0 L527.7 465.5 L528.4 473.8 L529.0 481.6 L529.6 488.9 L530.2 495.9 L531.0 503.4 L532.1 509.4 L533.5 515.8 L535.6 521.6 L536.8 523.7 L539.3 525.5 L545.3 526.0 L551.5 526.2 L557.7 526.5 L563.9 526.1 L565.3 525.5 L565.7 524.8 L567.2 518.1 L568.2 510.3 L568.8 503.0 L569.4 495.0 L569.8 488.9 L570.3 482.3 L570.7 475.6 L571.1 469.0 L571.5 462.4 L571.9 455.7 L572.3 449.4 L572.9 440.6 L573.6 432.7 L574.2 424.7 L574.8 415.6 L575.2 409.0 L575.6 402.2 L576.0 395.4 L576.5 389.1 L576.9 382.9 L577.3 376.4 L577.7 368.9 L578.1 359.4 L578.5 350.0 L578.9 342.6 L579.3 335.8 L580.0 327.5 L580.8 320.8 L581.8 314.6 L583.5 308.3 L584.9 304.8 L587.0 302.9 L588.2 302.7 L592.1 304.7 L592.6 304.5 L593.2 303.6 L595.0 297.3 L596.3 291.4 L597.3 284.8 L598.3 278.0 L599.4 271.0 L600.2 265.0 L601.0 258.2 L601.8 250.8 L602.7 243.2 L603.5 235.9 L604.3 229.1 L605.1 222.5 L606.0 216.4 L607.0 209.2 L608.0 202.2 L609.1 195.6 L610.3 188.8 L611.7 182.6 L613.2 178.8 L615.3 176.7 L615.9 176.5 L616.3 176.6 L616.7 177.0 L617.7 179.6 L618.6 183.2 L619.4 190.6 L620.0 198.8 L620.4 205.8 L620.8 213.2 L621.2 220.3 L621.7 227.0 L622.1 233.5 L622.5 240.2 L622.9 247.3 L623.3 255.3 L623.7 264.4 L624.1 274.0 L624.5 282.9 L625.0 290.7 L625.4 297.8 L625.8 304.4 L626.2 310.7 L626.6 316.9 L627.0 322.9 L627.6 331.4 L628.3 338.9 L628.9 345.7 L629.5 352.2 L630.3 359.7 L631.1 365.8 L632.2 373.0 L633.2 379.7 L634.5 386.1 L636.1 392.1 L637.1 394.7 L637.8 395.4 L638.2 395.5 L638.8 395.2 L641.7 390.8 L643.9 386.4 L644.6 385.8 L645.0 385.8 L645.8 386.3 L648.3 391.4 L649.9 397.9 L651.2 404.5 L652.2 411.5 L653.2 418.6 L654.3 426.1 L655.1 433.2 L655.9 439.8 L656.9 447.0 L658.0 454.2 L659.0 461.2 L660.0 468.0 L661.1 474.3 L662.1 480.4 L663.3 487.4 L664.6 493.7 L666.2 499.9 L667.7 503.2 L668.3 503.9 L668.7 504.0 L669.1 503.6 L670.6 497.9 L671.6 490.9 L672.2 484.5 L672.8 475.5 L673.3 467.1 L673.7 459.4 L674.1 452.5 L674.5 446.1 L674.9 440.0 L675.3 433.9 L675.9 425.0 L676.6 416.1 L676.8 407.2 L677.4 398.6 L678.0 391.1 L678.6 384.0 L678.8 369.8 L679.4 363.0 L680.1 355.4 L680.7 347.6 L681.3 340.1 L681.9 332.7 L682.5 325.8 L683.2 319.5 L684.0 312.1 L685.0 305.6 L686.7 299.4 L687.9 295.7 L688.3 295.1 L688.7 295.0 L690.2 296.6 L691.4 299.2 L693.3 305.7 L695.5 311.8 L696.6 313.3 L697.2 313.7 L697.8 313.5 L698.4 312.7 L700.5 306.6 L701.7 300.4 L702.8 293.8 L703.6 287.4 L704.4 280.2 L705.2 272.8 L706.1 265.3 L706.9 257.6 L707.7 250.2 L708.5 243.4 L709.4 237.2 L710.4 230.3 L711.4 223.9 L712.7 216.9 L714.1 210.5 L716.0 204.4 L717.6 200.6 L718.2 199.9 L719.1 199.8 L720.1 200.3 L720.5 200.7 L721.1 202.4 L722.2 207.6 L723.0 215.4 L723.6 222.4 L724.2 229.3 L724.9 236.8 L725.5 246.2 L725.9 254.1 L726.3 262.9 L726.7 272.2 L727.1 282.0 L727.5 291.4 L728.0 299.8 L728.4 307.4 L728.8 314.0 L729.4 321.9 L730.0 328.5 L730.6 335.0 L731.3 342.1 L731.9 349.8 L732.5 357.5 L733.1 365.0 L733.7 373.0 L734.3 380.6 L735.0 387.3 L735.6 393.4 L736.4 399.5 L737.7 405.6 L739.3 411.9 L739.9 413.3 L740.3 413.6 L741.0 413.4 L742.0 412.5 L743.0 410.7 L744.9 405.0 L747.1 399.3 L748.2 397.9 L748.8 397.6 L749.4 397.7 L750.0 398.6 L752.1 404.6 L753.3 410.8 L754.4 417.4 L755.2 423.8 L756.0 431.1 L756.8 438.6 L757.7 446.2 L758.5 453.9 L759.3 461.2 L760.1 467.9 L761.0 474.0 L762.0 480.2 L763.0 487.5 L764.1 494.2 L765.3 500.9 L766.8 507.5 L768.8 513.4 L769.6 514.8 L770.1 515.1 L770.9 515.1 L771.9 514.4 L772.3 513.7 L773.8 506.7 L774.6 498.3 L775.2 490.6 L775.8 483.2 L776.5 475.1 L776.9 468.7 L777.3 460.8 L777.7 451.7 L778.1 441.9 L778.5 431.5 L778.9 421.0 L779.3 411.4 L779.8 402.8 L780.2 395.1 L780.6 388.5 L781.2 380.6 L781.8 373.7 L782.4 366.5 L783.1 358.5 L783.7 350.1 L784.3 341.9 L784.9 333.8 L785.5 326.1 L786.2 319.1 L786.8 312.8 L787.6 305.2 L788.8 299.0 L790.5 292.9 L791.3 290.8 L791.5 290.5 L791.7 290.4 L792.3 290.7 L793.6 292.5 L795.6 298.7 L797.3 304.7 L799.2 309.4 L800.0 310.4 L800.6 310.6 L801.0 310.4 L801.6 309.5 L803.5 303.8 L804.7 297.6 L805.8 290.7 L806.6 284.1 L807.4 276.4 L808.0 270.4 L808.9 262.4 L809.5 256.2 L810.1 250.0 L810.7 243.9 L811.5 236.5 L812.4 229.6 L813.2 223.3 L814.2 216.3 L815.3 209.6 L816.5 202.9 L817.9 196.5 L819.8 190.7 L821.0 188.1 L821.7 187.5 L822.5 187.5 L823.5 188.2 L823.9 188.9 L825.4 195.9 L826.2 204.3 L826.8 212.0 L827.4 219.4 L828.1 227.5 L828.5 233.9 L828.9 241.8 L829.3 250.9 L829.7 260.7 L830.1 271.1 L830.5 281.6 L830.9 291.2 L831.4 299.8 L831.8 307.5 L832.2 314.1 L832.8 322.0 L833.4 328.9 L834.0 336.1 L834.7 344.1 L835.3 352.5 L835.9 360.7 L836.5 368.8 L837.1 376.5 L837.8 383.5 L838.4 389.8 L839.2 397.4 L840.4 403.6 L842.1 409.7 L842.9 411.8 L843.1 412.1 L843.3 412.2 L843.9 411.9 L845.2 410.1 L847.2 403.9 L848.9 397.9 L850.8 393.2 L851.6 392.2 L852.2 392.0 L852.6 392.2 L853.2 393.1 L855.1 398.8 L856.3 405.0 L857.4 411.9 L858.2 418.5 L859.0 426.2 L859.6 432.2 L860.5 440.2 L861.1 446.4 L861.7 452.6 L862.3 458.7 L863.1 466.1 L864.0 473.0 L864.8 479.3 L865.8 486.3 L866.9 493.0 L868.1 499.7 L869.5 506.1 L871.4 511.9 L872.6 514.5 L873.3 515.1 L874.1 515.1 L875.1 514.4 L875.5 513.7 L877.0 506.7 L877.8 498.3 L878.4 490.6 L879.0 483.2 L879.7 475.1 L880.1 468.7 L880.5 460.8 L880.9 451.7 L881.3 441.9 L881.7 431.5 L882.1 421.0 L882.5 411.4 L883.0 402.8 L883.4 395.1 L883.8 388.5 L884.4 380.6 L885.0 373.7 L885.6 366.5 L886.3 358.5 L886.9 350.1 L887.5 341.9 L888.1 333.8 L888.7 326.1 L889.4 319.1 L890.0 312.8 L890.8 305.2 L892.0 299.0 L893.7 292.9 L894.5 290.8 L894.7 290.5 L894.9 290.4 L895.5 290.7 L896.8 292.5 L898.8 298.7 L900.5 304.7 L902.4 309.4 L903.2 310.4 L903.8 310.6 L904.2 310.4 L904.8 309.5 L906.7 303.8 L907.9 297.6 L909.0 290.7 L909.8 284.1 L910.6 276.4 L911.2 270.4 L912.1 262.4 L912.7 256.2 L913.3 250.0 L913.9 243.9 L914.7 236.5 L915.6 229.6 L916.4 223.3 L917.4 216.3 L918.5 209.6 L919.7 202.9 L921.1 196.5 L923.0 190.7 L924.2 188.1 L924.9 187.5 L925.7 187.5 L926.7 188.2 L927.1 188.9 L928.6 195.9 L929.4 204.3 L930.0 212.0 L930.6 219.4 L931.3 227.5 L931.7 233.9 L932.1 241.8 L932.5 250.9 L932.9 260.7 L933.3 271.1 L933.7 281.6 L934.1 291.2 L934.6 299.8 L935.0 307.5 L935.4 314.1 L936.0 322.0 L936.6 328.9 L937.2 336.1 L937.9 344.1 L938.5 352.5 L939.1 360.7 L939.7 368.8 L940.3 376.5 L941.0 383.5 L941.6 389.8 L942.4 397.4 L943.6 403.6 L945.3 409.7 L946.1 411.8 L946.3 412.1 L946.5 412.2 L947.1 411.9 L948.4 410.1 L950.4 403.9 L952.1 397.9 L954.0 393.2 L954.8 392.2 L955.4 392.0 L955.8 392.2 L956.4 393.1 L958.3 398.8 L959.5 405.0 L960.6 411.9 L961.4 418.5 L962.2 426.2 L962.8 432.2 L963.7 440.2 L964.3 446.4 L964.9 452.6 L965.5 458.7 L966.3 466.1 L967.2 473.0 L968.0 479.3 L969.0 486.3 L970.1 493.0 L971.3 499.7 L972.7 506.1 L974.6 511.9 L975.8 514.5 L976.5 515.1 L977.3 515.1 L978.3 514.4 L978.7 513.7 L980.2 506.7 L981.0 498.3 L981.6 490.6 L982.2 483.2 L982.9 475.1 L983.3 468.7 L983.7 460.8 L984.1 451.7 L984.5 441.9 L984.9 431.5 L985.3 421.0 L985.7 411.4 L986.2 402.8 L986.6 395.1 L987.0 388.5 L987.6 380.6 L988.2 373.7 L988.8 366.5 L989.5 358.5 L990.1 350.1 L990.7 341.9 L991.3 333.8 L991.9 326.1 L992.6 319.1 L993.2 312.8 L994.0 305.2 L995.2 299.0 L996.9 292.9 L997.7 290.8 L997.9 290.5 L998.1 290.4 L998.7 290.7 L1000.0 292.5 L1002.0 298.7 L1003.7 304.7 L1005.6 309.4 L1006.4 310.4 L1007.0 310.6 L1007.4 310.4 L1008.0 309.5 L1009.9 303.8 L1011.1 297.6 L1012.2 290.7 L1013.0 284.1 L1013.8 276.4 L1014.4 270.4 L1015.3 262.4 L1015.9 256.2 L1016.5 250.0 L1017.1 243.9 L1017.9 236.5 L1018.8 229.6 L1019.6 223.3 L1020.6 216.3 L1021.7 209.6 L1022.9 202.9 L1024.3 196.5 L1026.2 190.7 L1027.4 188.1 L1028.1 187.5 L1028.9 187.5 L1029.9 188.2 L1030.3 188.9 L1031.8 195.9 L1032.6 204.3 L1033.2 212.0 L1033.8 219.4 L1034.5 227.5 L1034.9 233.9 L1035.3 241.8 L1035.7 250.9 L1036.1 260.7 L1036.5 271.1 L1036.9 281.6 L1037.3 291.2 L1037.8 299.8 L1038.2 307.5 L1038.6 314.1 L1039.2 322.0 L1039.8 328.9 L1040.4 336.1 L1041.1 344.1 L1041.7 352.5 L1042.3 360.7 L1042.9 368.8 L1043.5 376.5 L1044.2 383.5 L1044.8 389.8 L1045.6 397.4" fill="none" stroke="#c42a2a" stroke-width="1.0" stroke-opacity="0.75" stroke-linejoin="round" />
</g>
</svg>
<div class="t " style="left:391.0px;top:112.2px;transform:scaleX(0.842);color:#e8e8e8;">Voltage (V)</div>
<div class="t " style="left:398.5px;top:546.3px;transform:scaleX(0.880);color:#e6e6e6;">-5</div>
<div class="t " style="left:398.5px;top:505.5px;transform:scaleX(0.880);color:#e6e6e6;">-4</div>
<div class="t " style="left:398.5px;top:464.7px;transform:scaleX(0.880);color:#e6e6e6;">-3</div>
<div class="t " style="left:398.5px;top:423.8px;transform:scaleX(0.880);color:#e6e6e6;">-2</div>
<div class="t " style="left:398.5px;top:383.0px;transform:scaleX(0.880);color:#e6e6e6;">-1</div>
<div class="t " style="left:401.1px;top:342.1px;transform:scaleX(0.880);color:#e6e6e6;">0</div>
<div class="t " style="left:401.1px;top:301.2px;transform:scaleX(0.880);color:#e6e6e6;">1</div>
<div class="t " style="left:401.1px;top:260.4px;transform:scaleX(0.880);color:#e6e6e6;">2</div>
<div class="t " style="left:401.1px;top:219.6px;transform:scaleX(0.880);color:#e6e6e6;">3</div>
<div class="t " style="left:401.1px;top:178.7px;transform:scaleX(0.880);color:#e6e6e6;">4</div>
<div class="t " style="left:401.1px;top:137.9px;transform:scaleX(0.880);color:#e6e6e6;">5</div>
<div class="t " style="left:423.9px;top:558.8px;transform:scaleX(0.880);color:#e0e0e0;">0</div>
<div class="t " style="left:475.5px;top:558.8px;transform:scaleX(0.880);color:#e0e0e0;">1</div>
<div class="t " style="left:527.1px;top:558.8px;transform:scaleX(0.880);color:#e0e0e0;">2</div>
<div class="t " style="left:578.7px;top:558.8px;transform:scaleX(0.880);color:#e0e0e0;">3</div>
<div class="t " style="left:630.3px;top:558.8px;transform:scaleX(0.880);color:#e0e0e0;">4</div>
<div class="t " style="left:681.9px;top:558.8px;transform:scaleX(0.880);color:#e0e0e0;">5</div>
<div class="t " style="left:733.5px;top:558.8px;transform:scaleX(0.880);color:#e0e0e0;">6</div>
<div class="t " style="left:785.1px;top:558.8px;transform:scaleX(0.880);color:#e0e0e0;">7</div>
<div class="t " style="left:836.7px;top:558.8px;transform:scaleX(0.880);color:#e0e0e0;">8</div>
<div class="t " style="left:888.3px;top:558.8px;transform:scaleX(0.880);color:#e0e0e0;">9</div>
<div class="t " style="left:937.7px;top:558.8px;transform:scaleX(0.880);color:#e0e0e0;">10</div>
<div class="t " style="left:989.6px;top:558.8px;transform:scaleX(0.880);color:#e0e0e0;">11</div>
<div class="t " style="left:1040.9px;top:558.8px;transform:scaleX(0.880);color:#e0e0e0;">12</div>
<div class="t " style="left:729.2px;top:571.8px;transform:scaleX(0.871);color:#e8e8e8;">Time (ns)</div>
<div class="t b" style="left:415.2px;top:274.8px;transform:scaleX(0.856);font-size:8.2px;color:#f0220c;-webkit-text-stroke:0.4px #f0220c;">VIH(ac) min = 1.5 (V)</div>
<div class="t b" style="left:415.2px;top:279.9px;transform:scaleX(0.799);font-size:8.2px;color:#f0220c;-webkit-text-stroke:0.4px #f0220c;">VIH(dc) min = 1.375 (V)</div>
<div class="t b" style="left:415.2px;top:285.0px;transform:scaleX(0.841);font-size:8.2px;color:#f0220c;-webkit-text-stroke:0.4px #f0220c;">VREF(dc) = 1.25 (V)</div>
<div class="t b" style="left:415.2px;top:290.1px;transform:scaleX(0.740);font-size:8.2px;color:#f0220c;-webkit-text-stroke:0.4px #f0220c;">VIL(dc) max = 1.125 (V)</div>
<div class="t b" style="left:415.2px;top:295.2px;transform:scaleX(0.818);font-size:8.2px;color:#f0220c;-webkit-text-stroke:0.4px #f0220c;">VIL(ac) max = 1 (V)</div>
<div class="t b" style="left:415.2px;top:315.7px;transform:scaleX(0.871);font-size:8.2px;color:#f0220c;-webkit-text-stroke:0.4px #f0220c;">VIHdiff(ac) min = 0.5 (V)</div>
<div class="t b" style="left:415.2px;top:323.8px;transform:scaleX(0.867);font-size:8.2px;color:#f0220c;-webkit-text-stroke:0.4px #f0220c;">VIHdiff(dc) min = 0.3 (V)</div>
<div class="t b" style="left:415.2px;top:348.4px;transform:scaleX(0.847);font-size:8.2px;color:#f0220c;-webkit-text-stroke:0.4px #f0220c;">VILdiff(dc) max = -0.3 (V)</div>
<div class="t b" style="left:415.2px;top:356.5px;transform:scaleX(0.851);font-size:8.2px;color:#f0220c;-webkit-text-stroke:0.4px #f0220c;">VILdiff(ac) max = -0.5 (V)</div>
<div class="a" style="left:374px;top:598px;width:754px;height:48.2px;overflow:hidden">
<div class="a" style="left:37.6px;top:9.5px;width:26.8px;height:1px;background:#b02222"></div>
<div class="t " style="left:68.0px;top:3.8px;transform:scaleX(0.860);color:#e8e8e8;">result\1\Tran_Typ_Typ\DiePad\U1_Power.cur</div>
<div class="a" style="left:37.6px;top:22.8px;width:26.8px;height:1px;background:#358a40"></div>
<div class="t " style="left:68.0px;top:17.1px;transform:scaleX(0.853);color:#e8e8e8;">result\1\Tran_Typ_Typ\DiePad\U1_GND.cur</div>
<div class="a" style="left:37.6px;top:36.0px;width:26.8px;height:1px;background:#5048b0"></div>
<div class="t " style="left:68.0px;top:30.3px;transform:scaleX(0.853);color:#e8e8e8;">result\1\Tran_Typ_Typ\DiePad\U1_Signal1.cur</div>
<div class="a" style="left:37.6px;top:49.2px;width:26.8px;height:1px;background:#5a48c0"></div>
<div class="t " style="left:68.0px;top:43.5px;transform:scaleX(0.852);color:#e8e8e8;">result\1\Tran_Typ_Typ\DiePad\U1_Signal2.cur</div>
</div>
<div class="a" style="left:1076px;top:600.3px;width:5.6px;height:13.6px;background:#8e8e8e"></div>
<div class="a" style="left:635.4px;top:285px;width:178.4px;height:51.4px;background:#ffffc8"></div>
<svg style="left:639.6px;top:286.8px" width="9.8" height="9.8" viewBox="0 0 9.8 9.8"><circle cx="4.9" cy="4.9" r="4.8" fill="#1b8fea"/><rect x="4.3" y="4" width="1.3" height="3.6" fill="#fff"/><rect x="4.3" y="2" width="1.3" height="1.3" fill="#fff"/></svg>
<div class="t b" style="left:650.0px;top:288.0px;transform:scaleX(0.878);color:#1a1a1a;">Curve Node Info</div>
<div class="t " style="left:650.0px;top:300.6px;transform:scaleX(0.852);color:#2a2a2a;">result\1\Tran_Typ_Typ\DiePad\U1_Signal2.cur</div>
<div class="t " style="left:650.0px;top:311.8px;transform:scaleX(0.828);color:#2a2a2a;">4.02 (ns)</div>
<div class="t " style="left:650.0px;top:323.4px;transform:scaleX(0.808);color:#2a2a2a;">1.93085 (V)</div>
<svg style="left:573.2px;top:272.4px" width="9" height="14" viewBox="0 0 9 14"><path d="M0.5 0.5V11L3 8.6L4.8 12.8L6.4 12.1L4.6 8H8Z" fill="#fff" stroke="#222" stroke-width="0.5"/></svg>
<div class="a" style="left:1130.6px;top:57.2px;width:149.4px;height:602.5px;background:#444444;"></div>
<div class="a" style="left:1132px;top:57.4px;width:148px;height:15px;background:#333333;"></div>
<div class="a" style="left:1130.6px;top:72.7px;width:149.4px;height:2.2px;background:#747474;"></div>
<div class="t " style="left:1134.8px;top:59.4px;transform:scaleX(0.845);color:#ececec;">Page Properties</div>
<svg style="left:1241px;top:60px" width="11" height="10.6" viewBox="0 0 11 10.6"><rect x="0.5" y="0.5" width="10" height="9.6" fill="#2a2a2a" stroke="#e8e8e8" stroke-width="1"/></svg>
<div class="t b" style="left:1244.2px;top:59.3px;transform:scaleX(0.848);font-size:8.5px;color:#fff;">?</div>
<svg style="left:1253.9px;top:60px" width="10" height="11" viewBox="0 0 10 11"><g transform="rotate(45 5 5.5)"><rect x="3.6" y="0.2" width="2.8" height="4.6" fill="#3c70bc"/><rect x="2.2" y="4.4" width="5.6" height="1.1" fill="#3c70bc"/><path d="M5 5.4V10.6" stroke="#3566ac" stroke-width="0.9"/><rect x="4.2" y="0.8" width="0.8" height="3.4" fill="#6a9ade"/></g></svg>
<svg style="left:1268px;top:61.2px" width="8" height="8" viewBox="0 0 8 8"><path d="M0.4 0.4L7.6 7.6M7.6 0.4L0.4 7.6" stroke="#f4f4f4" stroke-width="1.15"/></svg>
<div class="a" style="left:1133.5px;top:76.4px;width:145px;height:15px;background:#444444;border:1px solid #6c6c6c;"></div>
<svg style="left:1137.6px;top:78.6px" width="11" height="11" viewBox="0 0 11 11"><circle cx="4.6" cy="4.6" r="3.7" fill="none" stroke="#f0f0f0" stroke-width="1"/><path d="M7.2 7.4L10.2 10.4" stroke="#f0f0f0" stroke-width="1.3"/></svg>
<div class="t " style="left:1152.8px;top:78.4px;transform:scaleX(0.814);color:#ececec;">Search</div>
<div class="a" style="left:1133.3px;top:94.6px;width:26.8px;height:15.4px;background:#0a78d7;"></div>
<svg style="left:1141.5px;top:97px" width="10" height="10" viewBox="0 0 10 10"><path d="M1.4 0V10M5 0V10M8.6 0V10" stroke="#fff" stroke-width="0.9"/><rect x="0.2" y="5.6" width="2.4" height="1.8" fill="#fff"/><rect x="3.8" y="2" width="2.4" height="1.8" fill="#fff"/><rect x="7.4" y="4.2" width="2.4" height="1.8" fill="#fff"/></svg>
<div class="a" style="left:1162.8px;top:94.6px;width:26.6px;height:15.4px;background:#787878;"></div>
<svg style="left:1171.5px;top:97px" width="10" height="10" viewBox="0 0 10 10"><path d="M1 2.4L4.4 0.6L9.6 5.2L6 9.4L0.8 5.4Z" fill="#e0453c"/><path d="M2.6 4L6.8 7.6M4 2.8L8 6.2" stroke="#f7a09a" stroke-width="0.7"/></svg>
<div class="a" style="left:1133.2px;top:113.2px;width:145.4px;height:12.8px;background:#7b7b7b;"></div>
<svg style="left:1139.3px;top:117.8px" width="5.8" height="3.4" viewBox="0 0 5.8 3.4"><path d="M0 0H5.8L2.9 3.4Z" fill="#f0f0f0"/></svg>
<div class="t " style="left:1150.0px;top:113.3px;transform:scaleX(0.857);color:#f2f2f2;">Selection Filter</div>
<div class="chip" style="left:1136.5px;top:130px;width:43.5px"></div>
<div class="t " style="left:1139.7px;top:130.9px;transform:scaleX(0.876);color:#ffffff;">All Objects</div>
<div class="chip" style="left:1136.5px;top:146.6px;width:48.2px"></div>
<div class="t " style="left:1139.7px;top:147.5px;transform:scaleX(0.909);color:#ffffff;">Component</div>
<div class="chip" style="left:1188px;top:146.6px;width:51.7px"></div>
<div class="t " style="left:1190.9px;top:147.5px;transform:scaleX(0.879);color:#ffffff;">Connect Line</div>
<div class="chip" style="left:1243.3px;top:146.6px;width:30.2px"></div>
<div class="t " style="left:1246.0px;top:147.5px;transform:scaleX(0.886);color:#ffffff;">Marker</div>
<div class="chip" style="left:1136.6px;top:163.2px;width:23.0px"></div>
<div class="t " style="left:1139.7px;top:164.1px;transform:scaleX(0.910);color:#ffffff;">Note</div>
<div class="chip" style="left:1162.7px;top:163.2px;width:16.5px"></div>
<div class="t " style="left:1165.7px;top:164.1px;transform:scaleX(0.838);color:#ffffff;">Pin</div>
<div class="chip" style="left:1182.6px;top:163.2px;width:35.4px"></div>
<div class="t " style="left:1185.4px;top:164.1px;transform:scaleX(0.885);color:#ffffff;">Property</div>
<div class="t " style="left:1139.7px;top:185.9px;transform:scaleX(0.864);color:#ececec;">Display Unconnected Power Pins</div>
<div class="a" style="left:1264.3px;top:185.5px;width:26px;height:13.2px;border-radius:6.6px;background:#808080"></div>
<div class="a" style="left:1265.4px;top:186.5px;width:11.2px;height:11.2px;border-radius:50%;background:#fafafa"></div>
<div class="t " style="left:1139.7px;top:203.6px;transform:scaleX(0.867);color:#ececec;">Display Unconnected Ground Pins</div>
<div class="a" style="left:1264.3px;top:203.2px;width:26px;height:13.2px;border-radius:6.6px;background:#808080"></div>
<div class="a" style="left:1265.4px;top:204.2px;width:11.2px;height:11.2px;border-radius:50%;background:#fafafa"></div>
<div class="t " style="left:1139.7px;top:218.8px;transform:scaleX(0.868);color:#ececec;">Display Pin Info</div>
<div class="t " style="left:1151.6px;top:233.1px;transform:scaleX(0.878);color:#ececec;">Net</div>
<div class="a" style="left:1264.3px;top:232.7px;width:26px;height:13.2px;border-radius:6.6px;background:#808080"></div>
<div class="a" style="left:1265.4px;top:233.7px;width:11.2px;height:11.2px;border-radius:50%;background:#fafafa"></div>
<div class="t " style="left:1151.6px;top:251.0px;transform:scaleX(0.838);color:#ececec;">Pin</div>
<div class="a" style="left:1264.3px;top:250.6px;width:26px;height:13.2px;border-radius:6.6px;background:#0a74d6"></div>
<div class="t " style="left:1151.6px;top:269.4px;transform:scaleX(0.883);color:#ececec;">Cktnode</div>
<div class="a" style="left:1264.3px;top:269.0px;width:26px;height:13.2px;border-radius:6.6px;background:#808080"></div>
<div class="a" style="left:1265.4px;top:270.0px;width:11.2px;height:11.2px;border-radius:50%;background:#fafafa"></div>
<div class="a" style="left:1139px;top:622.2px;width:145px;height:14.4px;background:#474747;border:1px solid #6e6e6e;"></div>
<div class="t " style="left:1146.0px;top:623.5px;transform:scaleX(0.885);color:#ececec;">Short Unconnected Ground Pins to GND</div>
<div class="a" style="left:1139px;top:638.4px;width:145px;height:14.2px;background:#474747;border:1px solid #6e6e6e;"></div>
<div class="t " style="left:1188.6px;top:639.6px;transform:scaleX(0.855);color:#ececec;">Cleanup Canvas</div>
<div class="a" style="left:0px;top:659.4px;width:1280px;height:18px;background:#808082;"></div>
<div class="a" style="left:0px;top:659.6px;width:1280px;height:1.3px;background:#929292;"></div>
<div class="a" style="left:1.4px;top:660.8px;width:66.2px;height:16.6px;background:#7e7e7e;"></div>
<div class="a" style="left:1.4px;top:660.8px;width:66.2px;height:1px;background:#585858;"></div>
<div class="a" style="left:1.2px;top:660.8px;width:1px;height:16.6px;background:#5e5e5e;"></div>
<div class="t " style="left:5.3px;top:664.8px;transform:scaleX(0.876);color:#ececec;">Analysis Options</div>
<div class="a" style="left:0px;top:677.2px;width:1280px;height:17px;background:#2c2c2c;"></div>
<div class="a" style="left:591px;top:678px;width:1px;height:16px;background:#444444;"></div>
<svg style="left:5.6px;top:680.4px" width="10" height="10" viewBox="0 0 10 10"><defs><radialGradient id="gb" cx="0.4" cy="0.3" r="0.7"><stop offset="0" stop-color="#7cf06a"/><stop offset="0.6" stop-color="#22b81c"/><stop offset="1" stop-color="#0c7a10"/></radialGradient></defs><circle cx="4.8" cy="4.8" r="4.6" fill="url(#gb)"/></svg>
<div class="t " style="left:18.0px;top:680.8px;transform:scaleX(0.826);color:#ececec;">Ready</div>
<div class="t " style="left:1183.4px;top:679.6px;transform:scaleX(0.801);color:#ececec;">22865.04, 25487.33 273%</div>
</body></html>
